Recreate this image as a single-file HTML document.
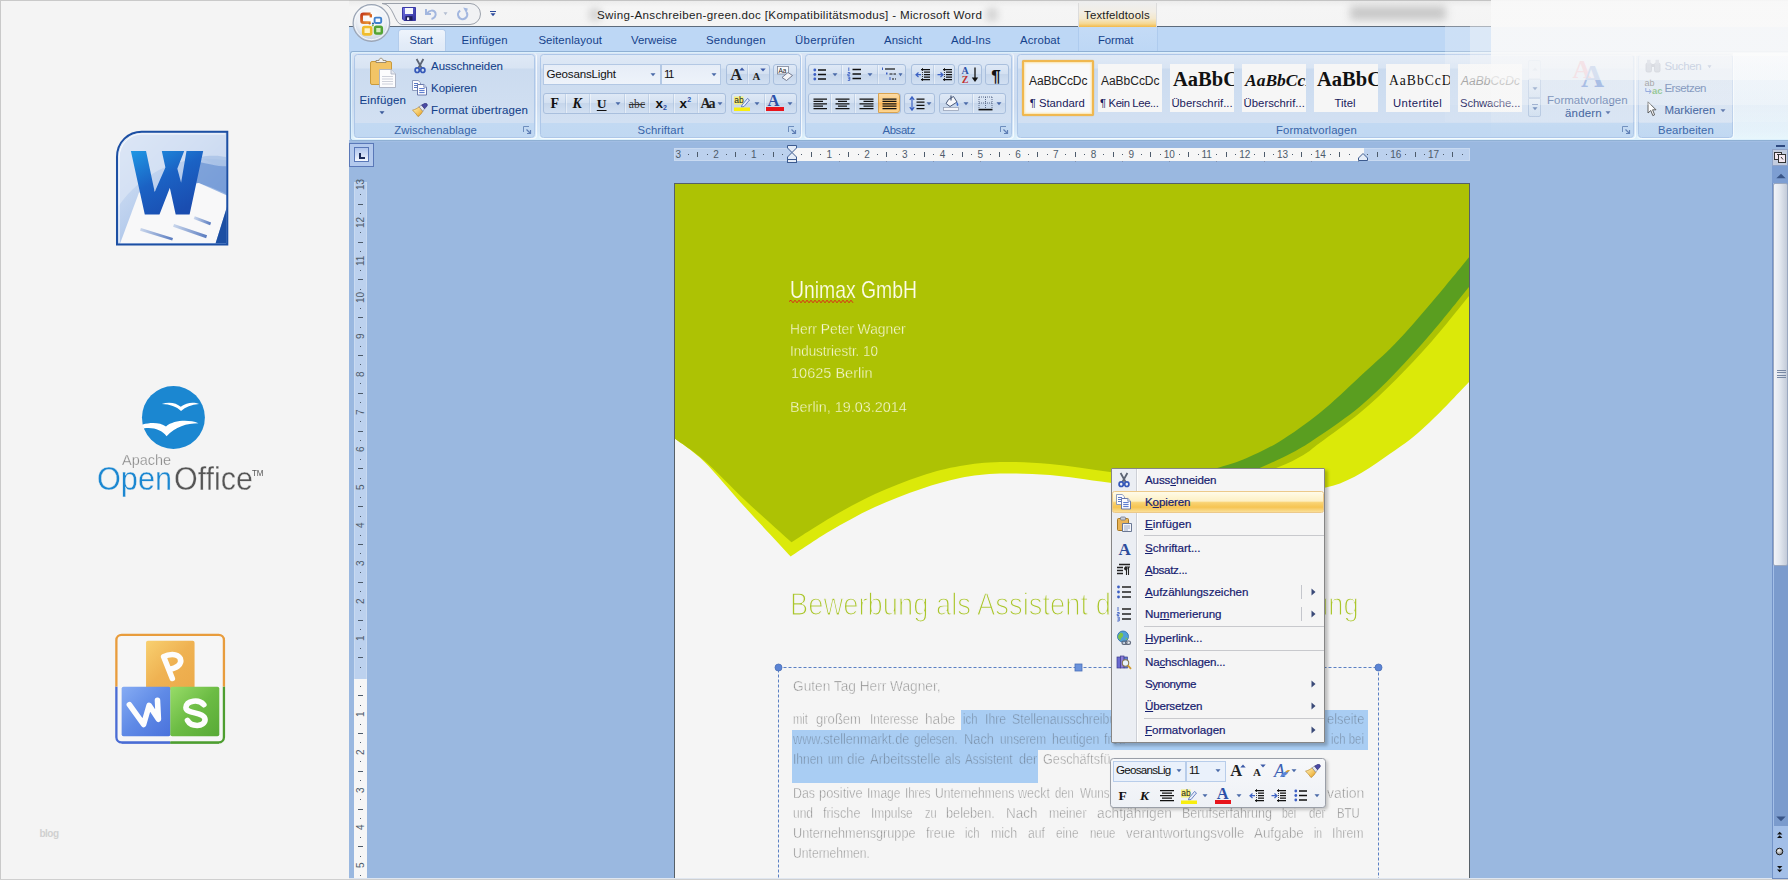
<!DOCTYPE html>
<html><head><meta charset="utf-8"><title>Word</title>
<style>
html,body{margin:0;padding:0}
html{width:1788px;height:880px;overflow:hidden}
body{width:1788px;height:880px;overflow:hidden;position:relative;background:#f4f4f4;font-family:"Liberation Sans",sans-serif}
div,span,svg{position:absolute;box-sizing:border-box}
span{white-space:pre;line-height:1}

</style></head>
<body>
<div style="left:0px;top:0px;width:349px;height:880px;background:#f4f4f4"></div>
<div style="left:0px;top:0px;width:1px;height:880px;background:#c9c9c9"></div>
<div style="left:0px;top:0px;width:349px;height:1px;background:#c9c9c9"></div>
<div style="left:349px;top:0px;width:1439px;height:27px;background:#efefef"></div>
<div style="left:349px;top:0px;width:1439px;height:1px;background:#c4c4c4"></div>
<div style="left:349px;top:27px;width:1439px;height:25px;background:#bed8f6"></div>
<div style="left:349px;top:52px;width:1439px;height:88px;background:linear-gradient(#c6dcf6,#cfe0f5 30%,#d6e5f8)"></div>
<div style="left:349px;top:140px;width:1439px;height:740px;background:#9ab8e0"></div>
<div style="left:674px;top:183px;width:796px;height:697px;background:#f5f5f5;border:1px solid #566068;border-bottom:none"></div>
<svg style="left:675px;top:184px;overflow:hidden" width="794" height="696" viewBox="0 0 794 696"><path d="M0.0 254.8C4.8 258.6 17.3 266.1 29.0 277.5C40.7 288.9 55.5 307.5 70.0 323.3C84.5 339.1 108.1 364.2 115.7 372.4C122.3 368.2 141.0 355.2 155.0 347.0C169.0 338.8 184.8 330.0 200.0 323.0C215.2 316.0 231.8 309.8 246.0 305.0C260.2 300.2 271.8 296.6 285.0 294.0C298.2 291.4 310.0 290.1 325.0 289.6C340.0 289.1 356.7 289.5 375.0 291.0C393.3 292.5 410.0 295.7 435.0 298.7C460.0 301.7 496.7 307.4 525.0 309.0C553.3 310.6 581.7 309.6 605.0 308.0C628.3 306.4 645.8 306.4 665.0 299.4C684.2 292.4 705.5 276.2 720.5 266.0C735.5 255.8 742.8 249.3 755.0 238.0C767.2 226.7 787.5 204.7 794.0 198.0L794 198.0 L794 -2 L0 -2 Z" fill="#dbe909"/><path d="M0.0 254.8C4.8 258.4 17.0 265.8 29.0 276.3C41.0 286.8 57.4 304.3 72.0 318.0C86.6 331.7 109.1 351.6 116.5 358.3C122.9 354.2 141.1 342.1 155.0 334.0C168.9 325.9 184.8 317.0 200.0 310.0C215.2 303.0 231.8 296.7 246.0 292.0C260.2 287.3 271.8 284.3 285.0 282.0C298.2 279.7 310.0 278.3 325.0 278.0C340.0 277.7 356.7 278.3 375.0 280.0C393.3 281.7 413.3 285.2 435.0 288.0C456.7 290.8 483.3 296.0 505.0 297.0C526.7 298.0 548.7 296.3 565.0 294.0C581.3 291.7 592.4 287.1 603.0 283.2C613.6 279.3 621.4 275.0 628.4 270.9C635.4 266.8 635.6 265.7 645.0 258.7C654.4 251.7 672.5 239.1 685.0 228.7C697.5 218.3 708.1 208.3 720.0 196.4C731.9 184.5 744.3 171.5 756.6 157.5C768.9 143.5 787.8 119.7 794.0 112.1L794 112.1 L794 -2 L0 -2 Z" fill="#adc204"/><path d="M455.0 306.0C463.3 304.0 490.0 297.8 505.0 294.0C520.0 290.2 533.8 286.5 544.9 283.2C556.0 279.9 561.9 278.3 571.8 274.0C581.7 269.7 592.4 264.9 604.6 257.4C616.8 249.8 631.6 239.5 645.0 228.7C658.4 217.9 672.5 203.9 685.0 192.4C697.5 180.9 708.1 172.1 720.0 159.8C731.9 147.5 744.3 132.9 756.6 118.5C768.9 104.1 787.8 80.7 794.0 73.2L794 73.2 L794 102.9 L794.0 102.9C787.8 110.5 768.9 134.3 756.6 148.7C744.3 163.1 731.9 177.0 720.0 189.3C708.1 201.6 697.5 212.0 685.0 222.4C672.5 232.8 655.8 244.1 645.0 251.5C634.2 258.9 630.3 261.6 620.5 266.9C610.7 272.2 602.2 276.3 586.3 283.2C570.4 290.1 546.9 300.9 525.0 308.0C503.1 315.1 466.7 323.0 455.0 326.0Z" fill="#5a9e20"/></svg>
<div style="left:674px;top:148px;width:796px;height:13px;background:#bcd1ee;border:1px solid #c9daf1"></div>
<div style="left:792px;top:148px;width:571.5px;height:13px;background:#f6f6f6"></div>
<div style="left:839px;top:161px;width:1px;height:1px;background:#8494b2"></div>
<div style="left:886px;top:161px;width:1px;height:1px;background:#8494b2"></div>
<div style="left:933px;top:161px;width:1px;height:1px;background:#8494b2"></div>
<div style="left:980px;top:161px;width:1px;height:1px;background:#8494b2"></div>
<div style="left:1028px;top:161px;width:1px;height:1px;background:#8494b2"></div>
<div style="left:1075px;top:161px;width:1px;height:1px;background:#8494b2"></div>
<div style="left:1122px;top:161px;width:1px;height:1px;background:#8494b2"></div>
<div style="left:1169px;top:161px;width:1px;height:1px;background:#8494b2"></div>
<div style="left:1216px;top:161px;width:1px;height:1px;background:#8494b2"></div>
<div style="left:1264px;top:161px;width:1px;height:1px;background:#8494b2"></div>
<div style="left:1311px;top:161px;width:1px;height:1px;background:#8494b2"></div>
<div style="left:1358px;top:161px;width:1px;height:1px;background:#8494b2"></div>
<svg style="left:674px;top:148px;" width="796" height="13" viewBox="0 0 796 13"><rect x="14.0" y="6" width="1" height="1" fill="#4d5b6b"/><rect x="23.0" y="4" width="1" height="5" fill="#4d5b6b"/><rect x="33.0" y="6" width="1" height="1" fill="#4d5b6b"/><rect x="52.0" y="6" width="1" height="1" fill="#4d5b6b"/><rect x="61.0" y="4" width="1" height="5" fill="#4d5b6b"/><rect x="71.0" y="6" width="1" height="1" fill="#4d5b6b"/><rect x="89.0" y="6" width="1" height="1" fill="#4d5b6b"/><rect x="99.0" y="4" width="1" height="5" fill="#4d5b6b"/><rect x="108.0" y="6" width="1" height="1" fill="#4d5b6b"/><rect x="127.0" y="6" width="1" height="1" fill="#4d5b6b"/><rect x="137.0" y="4" width="1" height="5" fill="#4d5b6b"/><rect x="146.0" y="6" width="1" height="1" fill="#4d5b6b"/><rect x="165.0" y="6" width="1" height="1" fill="#4d5b6b"/><rect x="174.0" y="4" width="1" height="5" fill="#4d5b6b"/><rect x="184.0" y="6" width="1" height="1" fill="#4d5b6b"/><rect x="203.0" y="6" width="1" height="1" fill="#4d5b6b"/><rect x="212.0" y="4" width="1" height="5" fill="#4d5b6b"/><rect x="222.0" y="6" width="1" height="1" fill="#4d5b6b"/><rect x="240.0" y="6" width="1" height="1" fill="#4d5b6b"/><rect x="250.0" y="4" width="1" height="5" fill="#4d5b6b"/><rect x="259.0" y="6" width="1" height="1" fill="#4d5b6b"/><rect x="278.0" y="6" width="1" height="1" fill="#4d5b6b"/><rect x="288.0" y="4" width="1" height="5" fill="#4d5b6b"/><rect x="297.0" y="6" width="1" height="1" fill="#4d5b6b"/><rect x="316.0" y="6" width="1" height="1" fill="#4d5b6b"/><rect x="325.0" y="4" width="1" height="5" fill="#4d5b6b"/><rect x="335.0" y="6" width="1" height="1" fill="#4d5b6b"/><rect x="354.0" y="6" width="1" height="1" fill="#4d5b6b"/><rect x="363.0" y="4" width="1" height="5" fill="#4d5b6b"/><rect x="373.0" y="6" width="1" height="1" fill="#4d5b6b"/><rect x="391.0" y="6" width="1" height="1" fill="#4d5b6b"/><rect x="401.0" y="4" width="1" height="5" fill="#4d5b6b"/><rect x="410.0" y="6" width="1" height="1" fill="#4d5b6b"/><rect x="429.0" y="6" width="1" height="1" fill="#4d5b6b"/><rect x="439.0" y="4" width="1" height="5" fill="#4d5b6b"/><rect x="448.0" y="6" width="1" height="1" fill="#4d5b6b"/><rect x="467.0" y="6" width="1" height="1" fill="#4d5b6b"/><rect x="476.0" y="4" width="1" height="5" fill="#4d5b6b"/><rect x="486.0" y="6" width="1" height="1" fill="#4d5b6b"/><rect x="505.0" y="6" width="1" height="1" fill="#4d5b6b"/><rect x="514.0" y="4" width="1" height="5" fill="#4d5b6b"/><rect x="524.0" y="6" width="1" height="1" fill="#4d5b6b"/><rect x="542.0" y="6" width="1" height="1" fill="#4d5b6b"/><rect x="552.0" y="4" width="1" height="5" fill="#4d5b6b"/><rect x="561.0" y="6" width="1" height="1" fill="#4d5b6b"/><rect x="580.0" y="6" width="1" height="1" fill="#4d5b6b"/><rect x="590.0" y="4" width="1" height="5" fill="#4d5b6b"/><rect x="599.0" y="6" width="1" height="1" fill="#4d5b6b"/><rect x="618.0" y="6" width="1" height="1" fill="#4d5b6b"/><rect x="627.0" y="4" width="1" height="5" fill="#4d5b6b"/><rect x="637.0" y="6" width="1" height="1" fill="#4d5b6b"/><rect x="656.0" y="6" width="1" height="1" fill="#4d5b6b"/><rect x="665.0" y="4" width="1" height="5" fill="#4d5b6b"/><rect x="675.0" y="6" width="1" height="1" fill="#4d5b6b"/><rect x="693.0" y="6" width="1" height="1" fill="#4d5b6b"/><rect x="703.0" y="4" width="1" height="5" fill="#4d5b6b"/><rect x="712.0" y="6" width="1" height="1" fill="#4d5b6b"/><rect x="731.0" y="6" width="1" height="1" fill="#4d5b6b"/><rect x="741.0" y="4" width="1" height="5" fill="#4d5b6b"/><rect x="750.0" y="6" width="1" height="1" fill="#4d5b6b"/><rect x="769.0" y="6" width="1" height="1" fill="#4d5b6b"/><rect x="778.0" y="4" width="1" height="5" fill="#4d5b6b"/><rect x="788.0" y="6" width="1" height="1" fill="#4d5b6b"/></svg>
<span style="left:675.45px;top:150.00px;font-size:10px;letter-spacing:0.000px;color:#4d5b6b;font-family:'Liberation Sans';font-weight:normal;font-style:normal;">3</span>
<span style="left:713.20px;top:150.00px;font-size:10px;letter-spacing:0.000px;color:#4d5b6b;font-family:'Liberation Sans';font-weight:normal;font-style:normal;">2</span>
<span style="left:750.95px;top:150.00px;font-size:10px;letter-spacing:0.000px;color:#4d5b6b;font-family:'Liberation Sans';font-weight:normal;font-style:normal;">1</span>
<span style="left:826.45px;top:150.00px;font-size:10px;letter-spacing:0.000px;color:#4d5b6b;font-family:'Liberation Sans';font-weight:normal;font-style:normal;">1</span>
<span style="left:864.20px;top:150.00px;font-size:10px;letter-spacing:0.000px;color:#4d5b6b;font-family:'Liberation Sans';font-weight:normal;font-style:normal;">2</span>
<span style="left:901.95px;top:150.00px;font-size:10px;letter-spacing:0.000px;color:#4d5b6b;font-family:'Liberation Sans';font-weight:normal;font-style:normal;">3</span>
<span style="left:939.70px;top:150.00px;font-size:10px;letter-spacing:0.000px;color:#4d5b6b;font-family:'Liberation Sans';font-weight:normal;font-style:normal;">4</span>
<span style="left:977.45px;top:150.00px;font-size:10px;letter-spacing:0.000px;color:#4d5b6b;font-family:'Liberation Sans';font-weight:normal;font-style:normal;">5</span>
<span style="left:1015.20px;top:150.00px;font-size:10px;letter-spacing:0.000px;color:#4d5b6b;font-family:'Liberation Sans';font-weight:normal;font-style:normal;">6</span>
<span style="left:1052.95px;top:150.00px;font-size:10px;letter-spacing:0.000px;color:#4d5b6b;font-family:'Liberation Sans';font-weight:normal;font-style:normal;">7</span>
<span style="left:1090.70px;top:150.00px;font-size:10px;letter-spacing:0.000px;color:#4d5b6b;font-family:'Liberation Sans';font-weight:normal;font-style:normal;">8</span>
<span style="left:1128.45px;top:150.00px;font-size:10px;letter-spacing:0.000px;color:#4d5b6b;font-family:'Liberation Sans';font-weight:normal;font-style:normal;">9</span>
<span style="left:1163.70px;top:150.00px;font-size:10px;letter-spacing:0.000px;color:#4d5b6b;font-family:'Liberation Sans';font-weight:normal;font-style:normal;">10</span>
<span style="left:1201.45px;top:150.00px;font-size:10px;letter-spacing:0.000px;color:#4d5b6b;font-family:'Liberation Sans';font-weight:normal;font-style:normal;">11</span>
<span style="left:1239.20px;top:150.00px;font-size:10px;letter-spacing:0.000px;color:#4d5b6b;font-family:'Liberation Sans';font-weight:normal;font-style:normal;">12</span>
<span style="left:1276.95px;top:150.00px;font-size:10px;letter-spacing:0.000px;color:#4d5b6b;font-family:'Liberation Sans';font-weight:normal;font-style:normal;">13</span>
<span style="left:1314.70px;top:150.00px;font-size:10px;letter-spacing:0.000px;color:#4d5b6b;font-family:'Liberation Sans';font-weight:normal;font-style:normal;">14</span>
<span style="left:1390.20px;top:150.00px;font-size:10px;letter-spacing:0.000px;color:#4d5b6b;font-family:'Liberation Sans';font-weight:normal;font-style:normal;">16</span>
<span style="left:1427.95px;top:150.00px;font-size:10px;letter-spacing:0.000px;color:#4d5b6b;font-family:'Liberation Sans';font-weight:normal;font-style:normal;">17</span>
<svg style="left:786px;top:144px;" width="12" height="20" viewBox="0 0 12 20"><path d="M1.5 1.5H10.5V4L6 8.5L1.5 4Z" fill="#e4ecf7" stroke="#3c5a8e" stroke-width="1"/><path d="M6 8.5L10.5 13V15.5H1.5V13Z" fill="#e4ecf7" stroke="#3c5a8e"/><rect x="1.5" y="15.5" width="9" height="3" fill="#e4ecf7" stroke="#3c5a8e"/></svg>
<svg style="left:1357.3px;top:152px;" width="12" height="10" viewBox="0 0 12 10"><path d="M6 1.5L10.5 6V8.5H1.5V6Z" fill="#e4ecf7" stroke="#3c5a8e"/></svg>
<div style="left:349px;top:143px;width:25px;height:24px;background:#b3c9ed;border:1px solid #5a78b8"></div>
<div style="left:354px;top:147px;width:15px;height:15px;background:linear-gradient(#b0c6ee,#cfdcf5 50%,#f6f9ff);border:1px solid #5a78b8"></div>
<div style="left:359px;top:153px;width:2px;height:6px;background:#1c2c5a"></div>
<div style="left:359px;top:157px;width:6px;height:2px;background:#1c2c5a"></div>
<div style="left:354px;top:182px;width:13px;height:698px;background:#bcd1ee;border:1px solid #c9daf1;border-bottom:none"></div>
<div style="left:354px;top:678.5px;width:13px;height:201.5px;background:#f6f6f6"></div>
<svg style="left:354px;top:182px;" width="13" height="698" viewBox="0 0 13 698"><rect x="6" y="12" width="1" height="1" fill="#4d5b6b"/><rect x="4" y="22" width="5" height="1" fill="#4d5b6b"/><rect x="6" y="31" width="1" height="1" fill="#4d5b6b"/><rect x="6" y="50" width="1" height="1" fill="#4d5b6b"/><rect x="4" y="60" width="5" height="1" fill="#4d5b6b"/><rect x="6" y="69" width="1" height="1" fill="#4d5b6b"/><rect x="6" y="88" width="1" height="1" fill="#4d5b6b"/><rect x="4" y="97" width="5" height="1" fill="#4d5b6b"/><rect x="6" y="107" width="1" height="1" fill="#4d5b6b"/><rect x="6" y="126" width="1" height="1" fill="#4d5b6b"/><rect x="4" y="135" width="5" height="1" fill="#4d5b6b"/><rect x="6" y="145" width="1" height="1" fill="#4d5b6b"/><rect x="6" y="164" width="1" height="1" fill="#4d5b6b"/><rect x="4" y="173" width="5" height="1" fill="#4d5b6b"/><rect x="6" y="182" width="1" height="1" fill="#4d5b6b"/><rect x="6" y="201" width="1" height="1" fill="#4d5b6b"/><rect x="4" y="211" width="5" height="1" fill="#4d5b6b"/><rect x="6" y="220" width="1" height="1" fill="#4d5b6b"/><rect x="6" y="239" width="1" height="1" fill="#4d5b6b"/><rect x="4" y="249" width="5" height="1" fill="#4d5b6b"/><rect x="6" y="258" width="1" height="1" fill="#4d5b6b"/><rect x="6" y="277" width="1" height="1" fill="#4d5b6b"/><rect x="4" y="286" width="5" height="1" fill="#4d5b6b"/><rect x="6" y="296" width="1" height="1" fill="#4d5b6b"/><rect x="6" y="315" width="1" height="1" fill="#4d5b6b"/><rect x="4" y="324" width="5" height="1" fill="#4d5b6b"/><rect x="6" y="334" width="1" height="1" fill="#4d5b6b"/><rect x="6" y="353" width="1" height="1" fill="#4d5b6b"/><rect x="4" y="362" width="5" height="1" fill="#4d5b6b"/><rect x="6" y="371" width="1" height="1" fill="#4d5b6b"/><rect x="6" y="390" width="1" height="1" fill="#4d5b6b"/><rect x="4" y="400" width="5" height="1" fill="#4d5b6b"/><rect x="6" y="409" width="1" height="1" fill="#4d5b6b"/><rect x="6" y="428" width="1" height="1" fill="#4d5b6b"/><rect x="4" y="438" width="5" height="1" fill="#4d5b6b"/><rect x="6" y="447" width="1" height="1" fill="#4d5b6b"/><rect x="6" y="466" width="1" height="1" fill="#4d5b6b"/><rect x="4" y="475" width="5" height="1" fill="#4d5b6b"/><rect x="6" y="485" width="1" height="1" fill="#4d5b6b"/><rect x="6" y="504" width="1" height="1" fill="#4d5b6b"/><rect x="4" y="513" width="5" height="1" fill="#4d5b6b"/><rect x="6" y="523" width="1" height="1" fill="#4d5b6b"/><rect x="6" y="542" width="1" height="1" fill="#4d5b6b"/><rect x="4" y="551" width="5" height="1" fill="#4d5b6b"/><rect x="6" y="560" width="1" height="1" fill="#4d5b6b"/><rect x="6" y="579" width="1" height="1" fill="#4d5b6b"/><rect x="4" y="589" width="5" height="1" fill="#4d5b6b"/><rect x="6" y="598" width="1" height="1" fill="#4d5b6b"/><rect x="6" y="617" width="1" height="1" fill="#4d5b6b"/><rect x="4" y="627" width="5" height="1" fill="#4d5b6b"/><rect x="6" y="636" width="1" height="1" fill="#4d5b6b"/><rect x="6" y="655" width="1" height="1" fill="#4d5b6b"/><rect x="4" y="664" width="5" height="1" fill="#4d5b6b"/><rect x="6" y="674" width="1" height="1" fill="#4d5b6b"/><rect x="6" y="693" width="1" height="1" fill="#4d5b6b"/></svg>
<span style="left:356.2px;top:190.0px;font-size:10px;color:#4d5b6b;transform:rotate(-90deg);transform-origin:0 0;width:9.2px;text-align:center">13</span>
<span style="left:356.2px;top:227.8px;font-size:10px;color:#4d5b6b;transform:rotate(-90deg);transform-origin:0 0;width:9.2px;text-align:center">12</span>
<span style="left:356.2px;top:265.6px;font-size:10px;color:#4d5b6b;transform:rotate(-90deg);transform-origin:0 0;width:9.2px;text-align:center">11</span>
<span style="left:356.2px;top:303.4px;font-size:10px;color:#4d5b6b;transform:rotate(-90deg);transform-origin:0 0;width:9.2px;text-align:center">10</span>
<span style="left:356.2px;top:338.9px;font-size:10px;color:#4d5b6b;transform:rotate(-90deg);transform-origin:0 0;width:4.6px;text-align:center">9</span>
<span style="left:356.2px;top:376.7px;font-size:10px;color:#4d5b6b;transform:rotate(-90deg);transform-origin:0 0;width:4.6px;text-align:center">8</span>
<span style="left:356.2px;top:414.5px;font-size:10px;color:#4d5b6b;transform:rotate(-90deg);transform-origin:0 0;width:4.6px;text-align:center">7</span>
<span style="left:356.2px;top:452.3px;font-size:10px;color:#4d5b6b;transform:rotate(-90deg);transform-origin:0 0;width:4.6px;text-align:center">6</span>
<span style="left:356.2px;top:490.1px;font-size:10px;color:#4d5b6b;transform:rotate(-90deg);transform-origin:0 0;width:4.6px;text-align:center">5</span>
<span style="left:356.2px;top:527.9px;font-size:10px;color:#4d5b6b;transform:rotate(-90deg);transform-origin:0 0;width:4.6px;text-align:center">4</span>
<span style="left:356.2px;top:565.7px;font-size:10px;color:#4d5b6b;transform:rotate(-90deg);transform-origin:0 0;width:4.6px;text-align:center">3</span>
<span style="left:356.2px;top:603.5px;font-size:10px;color:#4d5b6b;transform:rotate(-90deg);transform-origin:0 0;width:4.6px;text-align:center">2</span>
<span style="left:356.2px;top:641.3px;font-size:10px;color:#4d5b6b;transform:rotate(-90deg);transform-origin:0 0;width:4.6px;text-align:center">1</span>
<span style="left:356.2px;top:716.9px;font-size:10px;color:#4d5b6b;transform:rotate(-90deg);transform-origin:0 0;width:4.6px;text-align:center">1</span>
<span style="left:356.2px;top:754.7px;font-size:10px;color:#4d5b6b;transform:rotate(-90deg);transform-origin:0 0;width:4.6px;text-align:center">2</span>
<span style="left:356.2px;top:792.5px;font-size:10px;color:#4d5b6b;transform:rotate(-90deg);transform-origin:0 0;width:4.6px;text-align:center">3</span>
<span style="left:356.2px;top:830.3px;font-size:10px;color:#4d5b6b;transform:rotate(-90deg);transform-origin:0 0;width:4.6px;text-align:center">4</span>
<span style="left:356.2px;top:868.1px;font-size:10px;color:#4d5b6b;transform:rotate(-90deg);transform-origin:0 0;width:4.6px;text-align:center">5</span>
<span style="left:789.50px;top:279.00px;font-size:23.4px;letter-spacing:0.000px;color:#fcfce8;font-family:'Liberation Sans';font-weight:normal;font-style:normal;-webkit-text-stroke:0.15px #adc204;transform:scaleX(0.8280);transform-origin:0 0;">Unimax GmbH</span>
<svg style="left:789px;top:300px;" width="65" height="4" viewBox="0 0 65 4"><path d="M0 1.5L2 0.2L4 2.8L6 0.2L8 2.8L10 0.2L12 2.8L14 0.2L16 2.8L18 0.2L20 2.8L22 0.2L24 2.8L26 0.2L28 2.8L30 0.2L32 2.8L34 0.2L36 2.8L38 0.2L40 2.8L42 0.2L44 2.8L46 0.2L48 2.8L50 0.2L52 2.8L54 0.2L56 2.8L58 0.2L60 2.8L62 0.2L64 2.8" fill="none" stroke="#e0201a" stroke-width="0.9"/></svg>
<span style="left:789.50px;top:321.00px;font-size:15.3px;letter-spacing:0.000px;color:#f6f8d8;font-family:'Liberation Sans';font-weight:normal;font-style:normal;-webkit-text-stroke:0.3px #adc204;transform:scaleX(0.9037);transform-origin:0 0;">Herr Peter Wagner</span>
<span style="left:789.50px;top:343.00px;font-size:15.3px;letter-spacing:0.000px;color:#f6f8d8;font-family:'Liberation Sans';font-weight:normal;font-style:normal;-webkit-text-stroke:0.3px #adc204;transform:scaleX(0.8770);transform-origin:0 0;">Industriestr. 10</span>
<span style="left:790.50px;top:365.00px;font-size:15.3px;letter-spacing:0.000px;color:#f6f8d8;font-family:'Liberation Sans';font-weight:normal;font-style:normal;-webkit-text-stroke:0.3px #adc204;transform:scaleX(0.9487);transform-origin:0 0;">10625 Berlin</span>
<span style="left:789.50px;top:399.00px;font-size:15.3px;letter-spacing:0.000px;color:#f6f8d8;font-family:'Liberation Sans';font-weight:normal;font-style:normal;-webkit-text-stroke:0.3px #adc204;transform:scaleX(0.9406);transform-origin:0 0;">Berlin, 19.03.2014</span>
<span style="left:789.70px;top:589.00px;font-size:30.5px;letter-spacing:0.000px;color:#aac62a;font-family:'Liberation Sans';font-weight:normal;font-style:normal;-webkit-text-stroke:1.25px #f5f5f5;transform:scaleX(0.8969);transform-origin:0 0;">Bewerbung als Assistent der Geschäftsführung</span>
<div style="left:961px;top:710px;width:406.5px;height:20px;background:#a9cdf3"></div>
<div style="left:792px;top:730px;width:575.5px;height:20px;background:#a9cdf3"></div>
<div style="left:792px;top:750px;width:246px;height:32.5px;background:#a9cdf3"></div>
<svg style="left:770px;top:660px" width="620" height="220" viewBox="770 660 620 220"><rect x="778.5" y="667.5" width="600" height="240" fill="none" stroke="#5b80c4" stroke-width="1" stroke-dasharray="3 2"/><circle cx="778.5" cy="667.5" r="3.5" fill="#5b84d4" stroke="#4a6fb8" stroke-width="0.8"/><circle cx="1378.5" cy="667.5" r="3.5" fill="#5b84d4" stroke="#4a6fb8" stroke-width="0.8"/><rect x="1075" y="664" width="7" height="7" fill="#6b93dc" stroke="#4a6fb8" stroke-width="0.8"/></svg>
<span style="left:792.50px;top:679.00px;font-size:14px;letter-spacing:0.000px;color:#858585;font-family:'Liberation Sans';font-weight:normal;font-style:normal;-webkit-text-stroke:0.5px #f5f5f5;transform:scaleX(0.9770);transform-origin:0 0;">Guten Tag Herr Wagner,</span>
<span style="left:792.50px;top:712.00px;font-size:14px;letter-spacing:0.000px;color:#858585;font-family:'Liberation Sans';font-weight:normal;font-style:normal;-webkit-text-stroke:0.5px #f5f5f5;transform:scaleX(0.8033);transform-origin:0 0;">mit</span>
<span style="left:816.00px;top:712.00px;font-size:14px;letter-spacing:0.000px;color:#858585;font-family:'Liberation Sans';font-weight:normal;font-style:normal;-webkit-text-stroke:0.5px #f5f5f5;transform:scaleX(0.9329);transform-origin:0 0;">großem</span>
<span style="left:869.50px;top:712.00px;font-size:14px;letter-spacing:0.000px;color:#858585;font-family:'Liberation Sans';font-weight:normal;font-style:normal;-webkit-text-stroke:0.5px #f5f5f5;transform:scaleX(0.8421);transform-origin:0 0;">Interesse</span>
<span style="left:925.00px;top:712.00px;font-size:14px;letter-spacing:0.000px;color:#858585;font-family:'Liberation Sans';font-weight:normal;font-style:normal;-webkit-text-stroke:0.5px #f5f5f5;transform:scaleX(0.9789);transform-origin:0 0;">habe</span>
<span style="left:963.00px;top:712.00px;font-size:14px;letter-spacing:0.000px;color:#6f8298;font-family:'Liberation Sans';font-weight:normal;font-style:normal;-webkit-text-stroke:0.5px #a9cdf3;transform:scaleX(0.8098);transform-origin:0 0;">ich</span>
<span style="left:985.00px;top:712.00px;font-size:14px;letter-spacing:0.000px;color:#6f8298;font-family:'Liberation Sans';font-weight:normal;font-style:normal;-webkit-text-stroke:0.5px #a9cdf3;transform:scaleX(0.8705);transform-origin:0 0;">Ihre</span>
<span style="left:1012.00px;top:712.00px;font-size:14px;letter-spacing:0.000px;color:#6f8298;font-family:'Liberation Sans';font-weight:normal;font-style:normal;-webkit-text-stroke:0.5px #a9cdf3;transform:scaleX(0.8814);transform-origin:0 0;">Stellenausschreibung</span>
<span style="left:1326.60px;top:712.00px;font-size:14px;letter-spacing:0.000px;color:#6f8298;font-family:'Liberation Sans';font-weight:normal;font-style:normal;-webkit-text-stroke:0.5px #a9cdf3;transform:scaleX(0.9242);transform-origin:0 0;">elseite</span>
<span style="left:792.50px;top:732.00px;font-size:14px;letter-spacing:0.000px;color:#6f8298;font-family:'Liberation Sans';font-weight:normal;font-style:normal;-webkit-text-stroke:0.5px #a9cdf3;transform:scaleX(0.9054);transform-origin:0 0;">www.stellenmarkt.de</span>
<span style="left:913.75px;top:732.00px;font-size:14px;letter-spacing:0.000px;color:#6f8298;font-family:'Liberation Sans';font-weight:normal;font-style:normal;-webkit-text-stroke:0.5px #a9cdf3;transform:scaleX(0.8264);transform-origin:0 0;">gelesen.</span>
<span style="left:963.75px;top:732.00px;font-size:14px;letter-spacing:0.000px;color:#6f8298;font-family:'Liberation Sans';font-weight:normal;font-style:normal;-webkit-text-stroke:0.5px #a9cdf3;transform:scaleX(0.9178);transform-origin:0 0;">Nach</span>
<span style="left:1000.00px;top:732.00px;font-size:14px;letter-spacing:0.000px;color:#6f8298;font-family:'Liberation Sans';font-weight:normal;font-style:normal;-webkit-text-stroke:0.5px #a9cdf3;transform:scaleX(0.8445);transform-origin:0 0;">unserem</span>
<span style="left:1052.00px;top:732.00px;font-size:14px;letter-spacing:0.000px;color:#6f8298;font-family:'Liberation Sans';font-weight:normal;font-style:normal;-webkit-text-stroke:0.5px #a9cdf3;transform:scaleX(0.8842);transform-origin:0 0;">heutigen</span>
<span style="left:1103.75px;top:732.00px;font-size:14px;letter-spacing:0.000px;color:#6f8298;font-family:'Liberation Sans';font-weight:normal;font-style:normal;-webkit-text-stroke:0.5px #a9cdf3;transform:scaleX(0.8808);transform-origin:0 0;">freu</span>
<span style="left:1331.00px;top:732.00px;font-size:14px;letter-spacing:0.000px;color:#6f8298;font-family:'Liberation Sans';font-weight:normal;font-style:normal;-webkit-text-stroke:0.5px #a9cdf3;transform:scaleX(0.8154);transform-origin:0 0;">ich bei</span>
<span style="left:792.50px;top:752.00px;font-size:14px;letter-spacing:0.000px;color:#6f8298;font-family:'Liberation Sans';font-weight:normal;font-style:normal;-webkit-text-stroke:0.5px #a9cdf3;transform:scaleX(0.8560);transform-origin:0 0;">Ihnen</span>
<span style="left:827.50px;top:752.00px;font-size:14px;letter-spacing:0.000px;color:#6f8298;font-family:'Liberation Sans';font-weight:normal;font-style:normal;-webkit-text-stroke:0.5px #a9cdf3;transform:scaleX(0.7711);transform-origin:0 0;">um</span>
<span style="left:847.00px;top:752.00px;font-size:14px;letter-spacing:0.000px;color:#6f8298;font-family:'Liberation Sans';font-weight:normal;font-style:normal;-webkit-text-stroke:0.5px #a9cdf3;transform:scaleX(0.9632);transform-origin:0 0;">die</span>
<span style="left:869.50px;top:752.00px;font-size:14px;letter-spacing:0.000px;color:#6f8298;font-family:'Liberation Sans';font-weight:normal;font-style:normal;-webkit-text-stroke:0.5px #a9cdf3;transform:scaleX(0.9244);transform-origin:0 0;">Arbeitsstelle</span>
<span style="left:944.50px;top:752.00px;font-size:14px;letter-spacing:0.000px;color:#6f8298;font-family:'Liberation Sans';font-weight:normal;font-style:normal;-webkit-text-stroke:0.5px #a9cdf3;transform:scaleX(0.8656);transform-origin:0 0;">als</span>
<span style="left:965.00px;top:752.00px;font-size:14px;letter-spacing:0.000px;color:#6f8298;font-family:'Liberation Sans';font-weight:normal;font-style:normal;-webkit-text-stroke:0.5px #a9cdf3;transform:scaleX(0.8361);transform-origin:0 0;">Assistent</span>
<span style="left:1018.75px;top:752.00px;font-size:14px;letter-spacing:0.000px;color:#6f8298;font-family:'Liberation Sans';font-weight:normal;font-style:normal;-webkit-text-stroke:0.5px #a9cdf3;transform:scaleX(0.9019);transform-origin:0 0;">der</span>
<span style="left:1042.50px;top:752.00px;font-size:14px;letter-spacing:0.000px;color:#858585;font-family:'Liberation Sans';font-weight:normal;font-style:normal;-webkit-text-stroke:0.5px #f5f5f5;transform:scaleX(0.9036);transform-origin:0 0;">Geschäftsfü</span>
<span style="left:792.50px;top:786.00px;font-size:14px;letter-spacing:0.000px;color:#858585;font-family:'Liberation Sans';font-weight:normal;font-style:normal;-webkit-text-stroke:0.5px #f5f5f5;transform:scaleX(0.8833);transform-origin:0 0;">Das</span>
<span style="left:818.75px;top:786.00px;font-size:14px;letter-spacing:0.000px;color:#858585;font-family:'Liberation Sans';font-weight:normal;font-style:normal;-webkit-text-stroke:0.5px #f5f5f5;transform:scaleX(0.9217);transform-origin:0 0;">positive</span>
<span style="left:867.00px;top:786.00px;font-size:14px;letter-spacing:0.000px;color:#858585;font-family:'Liberation Sans';font-weight:normal;font-style:normal;-webkit-text-stroke:0.5px #f5f5f5;transform:scaleX(0.8607);transform-origin:0 0;">Image</span>
<span style="left:905.00px;top:786.00px;font-size:14px;letter-spacing:0.000px;color:#858585;font-family:'Liberation Sans';font-weight:normal;font-style:normal;-webkit-text-stroke:0.5px #f5f5f5;transform:scaleX(0.8193);transform-origin:0 0;">Ihres</span>
<span style="left:934.50px;top:786.00px;font-size:14px;letter-spacing:0.000px;color:#858585;font-family:'Liberation Sans';font-weight:normal;font-style:normal;-webkit-text-stroke:0.5px #f5f5f5;transform:scaleX(0.8630);transform-origin:0 0;">Unternehmens</span>
<span style="left:1018.00px;top:786.00px;font-size:14px;letter-spacing:0.000px;color:#858585;font-family:'Liberation Sans';font-weight:normal;font-style:normal;-webkit-text-stroke:0.5px #f5f5f5;transform:scaleX(0.8939);transform-origin:0 0;">weckt</span>
<span style="left:1055.00px;top:786.00px;font-size:14px;letter-spacing:0.000px;color:#858585;font-family:'Liberation Sans';font-weight:normal;font-style:normal;-webkit-text-stroke:0.5px #f5f5f5;transform:scaleX(0.8027);transform-origin:0 0;">den</span>
<span style="left:1080.00px;top:786.00px;font-size:14px;letter-spacing:0.000px;color:#858585;font-family:'Liberation Sans';font-weight:normal;font-style:normal;-webkit-text-stroke:0.5px #f5f5f5;transform:scaleX(0.8300);transform-origin:0 0;">Wunsch,</span>
<span style="left:1326.60px;top:786.00px;font-size:14px;letter-spacing:0.000px;color:#858585;font-family:'Liberation Sans';font-weight:normal;font-style:normal;-webkit-text-stroke:0.5px #f5f5f5;transform:scaleX(1.0011);transform-origin:0 0;">vation</span>
<span style="left:792.50px;top:806.00px;font-size:14px;letter-spacing:0.000px;color:#858585;font-family:'Liberation Sans';font-weight:normal;font-style:normal;-webkit-text-stroke:0.5px #f5f5f5;transform:scaleX(0.8562);transform-origin:0 0;">und</span>
<span style="left:823.00px;top:806.00px;font-size:14px;letter-spacing:0.000px;color:#858585;font-family:'Liberation Sans';font-weight:normal;font-style:normal;-webkit-text-stroke:0.5px #f5f5f5;transform:scaleX(0.9094);transform-origin:0 0;">frische</span>
<span style="left:871.25px;top:806.00px;font-size:14px;letter-spacing:0.000px;color:#858585;font-family:'Liberation Sans';font-weight:normal;font-style:normal;-webkit-text-stroke:0.5px #f5f5f5;transform:scaleX(0.8515);transform-origin:0 0;">Impulse</span>
<span style="left:924.50px;top:806.00px;font-size:14px;letter-spacing:0.000px;color:#858585;font-family:'Liberation Sans';font-weight:normal;font-style:normal;-webkit-text-stroke:0.5px #f5f5f5;transform:scaleX(0.7941);transform-origin:0 0;">zu</span>
<span style="left:946.25px;top:806.00px;font-size:14px;letter-spacing:0.000px;color:#858585;font-family:'Liberation Sans';font-weight:normal;font-style:normal;-webkit-text-stroke:0.5px #f5f5f5;transform:scaleX(0.9075);transform-origin:0 0;">beleben.</span>
<span style="left:1005.50px;top:806.00px;font-size:14px;letter-spacing:0.000px;color:#858585;font-family:'Liberation Sans';font-weight:normal;font-style:normal;-webkit-text-stroke:0.5px #f5f5f5;transform:scaleX(0.9637);transform-origin:0 0;">Nach</span>
<span style="left:1048.75px;top:806.00px;font-size:14px;letter-spacing:0.000px;color:#858585;font-family:'Liberation Sans';font-weight:normal;font-style:normal;-webkit-text-stroke:0.5px #f5f5f5;transform:scaleX(0.8762);transform-origin:0 0;">meiner</span>
<span style="left:1097.00px;top:806.00px;font-size:14px;letter-spacing:0.000px;color:#858585;font-family:'Liberation Sans';font-weight:normal;font-style:normal;-webkit-text-stroke:0.5px #f5f5f5;transform:scaleX(0.9832);transform-origin:0 0;">achtjährigen</span>
<span style="left:1182.00px;top:806.00px;font-size:14px;letter-spacing:0.000px;color:#858585;font-family:'Liberation Sans';font-weight:normal;font-style:normal;-webkit-text-stroke:0.5px #f5f5f5;transform:scaleX(0.8964);transform-origin:0 0;">Berufserfahrung</span>
<span style="left:1282.00px;top:806.00px;font-size:14px;letter-spacing:0.000px;color:#858585;font-family:'Liberation Sans';font-weight:normal;font-style:normal;-webkit-text-stroke:0.5px #f5f5f5;transform:scaleX(0.7492);transform-origin:0 0;">bei</span>
<span style="left:1308.60px;top:806.00px;font-size:14px;letter-spacing:0.000px;color:#858585;font-family:'Liberation Sans';font-weight:normal;font-style:normal;-webkit-text-stroke:0.5px #f5f5f5;transform:scaleX(0.8105);transform-origin:0 0;">der</span>
<span style="left:1337.00px;top:806.00px;font-size:14px;letter-spacing:0.000px;color:#858585;font-family:'Liberation Sans';font-weight:normal;font-style:normal;-webkit-text-stroke:0.5px #f5f5f5;transform:scaleX(0.8107);transform-origin:0 0;">BTU</span>
<span style="left:792.50px;top:826.00px;font-size:14px;letter-spacing:0.000px;color:#858585;font-family:'Liberation Sans';font-weight:normal;font-style:normal;-webkit-text-stroke:0.5px #f5f5f5;transform:scaleX(0.9046);transform-origin:0 0;">Unternehmensgruppe</span>
<span style="left:925.50px;top:826.00px;font-size:14px;letter-spacing:0.000px;color:#858585;font-family:'Liberation Sans';font-weight:normal;font-style:normal;-webkit-text-stroke:0.5px #f5f5f5;transform:scaleX(0.9085);transform-origin:0 0;">freue</span>
<span style="left:965.00px;top:826.00px;font-size:14px;letter-spacing:0.000px;color:#858585;font-family:'Liberation Sans';font-weight:normal;font-style:normal;-webkit-text-stroke:0.5px #f5f5f5;transform:scaleX(0.8098);transform-origin:0 0;">ich</span>
<span style="left:991.25px;top:826.00px;font-size:14px;letter-spacing:0.000px;color:#858585;font-family:'Liberation Sans';font-weight:normal;font-style:normal;-webkit-text-stroke:0.5px #f5f5f5;transform:scaleX(0.8879);transform-origin:0 0;">mich</span>
<span style="left:1028.00px;top:826.00px;font-size:14px;letter-spacing:0.000px;color:#858585;font-family:'Liberation Sans';font-weight:normal;font-style:normal;-webkit-text-stroke:0.5px #f5f5f5;transform:scaleX(0.8732);transform-origin:0 0;">auf</span>
<span style="left:1056.25px;top:826.00px;font-size:14px;letter-spacing:0.000px;color:#858585;font-family:'Liberation Sans';font-weight:normal;font-style:normal;-webkit-text-stroke:0.5px #f5f5f5;transform:scaleX(0.8501);transform-origin:0 0;">eine</span>
<span style="left:1089.50px;top:826.00px;font-size:14px;letter-spacing:0.000px;color:#858585;font-family:'Liberation Sans';font-weight:normal;font-style:normal;-webkit-text-stroke:0.5px #f5f5f5;transform:scaleX(0.8185);transform-origin:0 0;">neue</span>
<span style="left:1125.50px;top:826.00px;font-size:14px;letter-spacing:0.000px;color:#858585;font-family:'Liberation Sans';font-weight:normal;font-style:normal;-webkit-text-stroke:0.5px #f5f5f5;transform:scaleX(0.9501);transform-origin:0 0;">verantwortungsvolle</span>
<span style="left:1254.00px;top:826.00px;font-size:14px;letter-spacing:0.000px;color:#858585;font-family:'Liberation Sans';font-weight:normal;font-style:normal;-webkit-text-stroke:0.5px #f5f5f5;transform:scaleX(0.9545);transform-origin:0 0;">Aufgabe</span>
<span style="left:1314.00px;top:826.00px;font-size:14px;letter-spacing:0.000px;color:#858585;font-family:'Liberation Sans';font-weight:normal;font-style:normal;-webkit-text-stroke:0.5px #f5f5f5;transform:scaleX(0.7335);transform-origin:0 0;">in</span>
<span style="left:1332.40px;top:826.00px;font-size:14px;letter-spacing:0.000px;color:#858585;font-family:'Liberation Sans';font-weight:normal;font-style:normal;-webkit-text-stroke:0.5px #f5f5f5;transform:scaleX(0.8828);transform-origin:0 0;">Ihrem</span>
<span style="left:792.50px;top:846.00px;font-size:14px;letter-spacing:0.000px;color:#858585;font-family:'Liberation Sans';font-weight:normal;font-style:normal;-webkit-text-stroke:0.5px #f5f5f5;transform:scaleX(0.8679);transform-origin:0 0;">Unternehmen.</span>
<div style="left:1113px;top:470px;width:215px;height:276px;background:rgba(0,0,0,.22);filter:blur(1.5px);border-radius:2px"></div>
<div style="left:1111px;top:468px;width:214px;height:275px;background:#f5f5f5;border:1px solid #868686;border-radius:1px"></div>
<div style="left:1112px;top:469px;width:24.5px;height:273px;background:#ebeef3;border-right:1px solid #cdd0d6"></div>
<div style="left:1137px;top:469px;width:1px;height:273px;background:#fdfdfd"></div>
<div style="left:1112px;top:491px;width:212px;height:21.5px;background:linear-gradient(#fffbe8,#fdf0c4 45%,#f9d373 53%,#f6c452 76%,#fadf98);border:1px solid #ecc98a;border-radius:2.5px"></div>
<span style="left:1145.00px;top:474.00px;font-size:11.6px;letter-spacing:-0.122px;color:#16206f;font-family:'Liberation Sans';font-weight:normal;font-style:normal;text-underline-offset:1px;text-decoration-thickness:1px;-webkit-text-stroke:0.2px #16206f;">Auss<u>c</u>hneiden</span>
<span style="left:1145.00px;top:496.00px;font-size:11.6px;letter-spacing:-0.132px;color:#16206f;font-family:'Liberation Sans';font-weight:normal;font-style:normal;text-underline-offset:1px;text-decoration-thickness:1px;-webkit-text-stroke:0.2px #16206f;">K<u>o</u>pieren</span>
<span style="left:1145.00px;top:518.00px;font-size:11.6px;letter-spacing:0.103px;color:#16206f;font-family:'Liberation Sans';font-weight:normal;font-style:normal;text-underline-offset:1px;text-decoration-thickness:1px;-webkit-text-stroke:0.2px #16206f;"><u>E</u>infügen</span>
<span style="left:1145.00px;top:542.00px;font-size:11.6px;letter-spacing:-0.047px;color:#16206f;font-family:'Liberation Sans';font-weight:normal;font-style:normal;text-underline-offset:1px;text-decoration-thickness:1px;-webkit-text-stroke:0.2px #16206f;"><u>S</u>chriftart...</span>
<span style="left:1145.00px;top:564.00px;font-size:11.6px;letter-spacing:-0.326px;color:#16206f;font-family:'Liberation Sans';font-weight:normal;font-style:normal;text-underline-offset:1px;text-decoration-thickness:1px;-webkit-text-stroke:0.2px #16206f;"><u>A</u>bsatz...</span>
<span style="left:1145.00px;top:586.00px;font-size:11.6px;letter-spacing:-0.017px;color:#16206f;font-family:'Liberation Sans';font-weight:normal;font-style:normal;text-underline-offset:1px;text-decoration-thickness:1px;-webkit-text-stroke:0.2px #16206f;"><u>A</u>ufzählungszeichen</span>
<svg style="left:1310.5px;top:588px;" width="6" height="8" viewBox="0 0 6 8"><path d="M0.5 0.5L4.5 4L0.5 7.5Z" fill="#3a4a78"/></svg>
<div style="left:1301px;top:585px;width:1px;height:14px;background:#c4c6cc"></div>
<span style="left:1145.00px;top:608.00px;font-size:11.6px;letter-spacing:-0.017px;color:#16206f;font-family:'Liberation Sans';font-weight:normal;font-style:normal;text-underline-offset:1px;text-decoration-thickness:1px;-webkit-text-stroke:0.2px #16206f;">Nu<u>m</u>merierung</span>
<svg style="left:1310.5px;top:610px;" width="6" height="8" viewBox="0 0 6 8"><path d="M0.5 0.5L4.5 4L0.5 7.5Z" fill="#3a4a78"/></svg>
<div style="left:1301px;top:607px;width:1px;height:14px;background:#c4c6cc"></div>
<span style="left:1145.00px;top:632.00px;font-size:11.6px;letter-spacing:-0.045px;color:#16206f;font-family:'Liberation Sans';font-weight:normal;font-style:normal;text-underline-offset:1px;text-decoration-thickness:1px;-webkit-text-stroke:0.2px #16206f;"><u>H</u>yperlink...</span>
<span style="left:1145.00px;top:656.00px;font-size:11.6px;letter-spacing:-0.189px;color:#16206f;font-family:'Liberation Sans';font-weight:normal;font-style:normal;text-underline-offset:1px;text-decoration-thickness:1px;-webkit-text-stroke:0.2px #16206f;">Na<u>c</u>hschlagen...</span>
<span style="left:1145.00px;top:678.00px;font-size:11.6px;letter-spacing:-0.469px;color:#16206f;font-family:'Liberation Sans';font-weight:normal;font-style:normal;text-underline-offset:1px;text-decoration-thickness:1px;-webkit-text-stroke:0.2px #16206f;">S<u>y</u>nonyme</span>
<svg style="left:1310.5px;top:680px;" width="6" height="8" viewBox="0 0 6 8"><path d="M0.5 0.5L4.5 4L0.5 7.5Z" fill="#3a4a78"/></svg>
<span style="left:1145.00px;top:700.00px;font-size:11.6px;letter-spacing:-0.200px;color:#16206f;font-family:'Liberation Sans';font-weight:normal;font-style:normal;text-underline-offset:1px;text-decoration-thickness:1px;-webkit-text-stroke:0.2px #16206f;"><u>Ü</u>bersetzen</span>
<svg style="left:1310.5px;top:702px;" width="6" height="8" viewBox="0 0 6 8"><path d="M0.5 0.5L4.5 4L0.5 7.5Z" fill="#3a4a78"/></svg>
<span style="left:1145.00px;top:724.00px;font-size:11.6px;letter-spacing:-0.054px;color:#16206f;font-family:'Liberation Sans';font-weight:normal;font-style:normal;text-underline-offset:1px;text-decoration-thickness:1px;-webkit-text-stroke:0.2px #16206f;"><u>F</u>ormatvorlagen</span>
<svg style="left:1310.5px;top:726px;" width="6" height="8" viewBox="0 0 6 8"><path d="M0.5 0.5L4.5 4L0.5 7.5Z" fill="#3a4a78"/></svg>
<div style="left:1143.5px;top:535px;width:180px;height:1px;background:#c8c9cd"></div>
<div style="left:1143.5px;top:626px;width:180px;height:1px;background:#c8c9cd"></div>
<div style="left:1143.5px;top:650px;width:180px;height:1px;background:#c8c9cd"></div>
<div style="left:1143.5px;top:717.5px;width:180px;height:1px;background:#c8c9cd"></div>
<svg style="left:1116px;top:472px;" width="16" height="16" viewBox="0 0 16 16"><path d="M4.6 1L9.6 10M11.4 1L6.4 10" stroke="#5c6474" stroke-width="1.8" fill="none"/><ellipse cx="5.2" cy="12.2" rx="2.1" ry="2.3" fill="none" stroke="#3558b8" stroke-width="1.7"/><ellipse cx="10.8" cy="12.2" rx="2.1" ry="2.3" fill="none" stroke="#3558b8" stroke-width="1.7"/></svg>
<svg style="left:1116px;top:494px;" width="16" height="16" viewBox="0 0 16 16"><path d="M0.5 0.5H6.2L8.5 2.8V10.5H0.5Z" fill="#fdfdff" stroke="#8494b8" stroke-width=".9"/><path d="M2 3.5H6M2 5.5H6.8M2 7.5H5" stroke="#4a6cc0" stroke-width=".9"/><path d="M5.5 4.5H11.8L14.5 7.2V15H5.5Z" fill="#fdfdff" stroke="#5a6ca4" stroke-width=".9"/><path d="M11.8 4.5V7.2H14.5" fill="#dfe6f4" stroke="#5a6ca4" stroke-width=".7"/><path d="M7.2 8.6H12.6M7.2 10.6H12.6M7.2 12.6H12.6" stroke="#3c62c4" stroke-width=".9"/></svg>
<svg style="left:1116px;top:516px;" width="16" height="16" viewBox="0 0 16 16"><rect x="1.5" y="2.5" width="11" height="12" rx="1" fill="#e9b456" stroke="#a87824"/><rect x="4.5" y="1" width="5" height="3" rx="1" fill="#c8ccd6" stroke="#70778a" stroke-width=".8"/><path d="M6.5 7.5H15.5V15.5H6.5Z" fill="#f4f6fb" stroke="#6a7894"/><path d="M8 10H14M8 12H14M8 14H12" stroke="#8c9ab8" stroke-width=".8"/></svg>
<span style="left:1118.50px;top:541.00px;font-size:17px;letter-spacing:0.000px;color:#2c4c9c;font-family:'Liberation Serif';font-weight:bold;font-style:normal;">A</span>
<svg style="left:1116px;top:562px;" width="16" height="16" viewBox="0 0 16 16"><path d="M3 2.5H14M1 5.5H7M1 8.5H7M1 11.5H7" stroke="#222" stroke-width="1.3"/><path d="M10.5 5V13M12.5 5V13M9 5H14" stroke="#222" stroke-width="1.1" fill="none"/><circle cx="9.8" cy="6.6" r="1.8" fill="#222"/></svg>
<svg style="left:1116px;top:584px;" width="16" height="16" viewBox="0 0 16 16"><circle cx="2.5" cy="3" r="1.4" fill="#3c5fc4"/><circle cx="2.5" cy="8" r="1.4" fill="#3c5fc4"/><circle cx="2.5" cy="13" r="1.4" fill="#3c5fc4"/><path d="M6 3H15M6 8H15M6 13H15" stroke="#222" stroke-width="1.3"/></svg>
<svg style="left:1116px;top:606px;" width="16" height="16" viewBox="0 0 16 16"><path d="M6 3H15M6 8H15M6 13H15" stroke="#222" stroke-width="1.3"/><path d="M2 1V5M1.2 6.5H3.2V8H1.2V9.5H3.2M1.2 11H3.2V15H1.2M1.5 13H3.2" stroke="#3c5fc4" stroke-width=".9" fill="none"/></svg>
<svg style="left:1116px;top:630px;" width="16" height="16" viewBox="0 0 16 16"><circle cx="7" cy="6.5" r="5.5" fill="#4fa0d8" stroke="#2c6aa8" stroke-width=".8"/><path d="M4 3C6 2 8 4 7 6S4 8 5 10.5C3 10 1.8 8 2 6Z" fill="#7cc24a"/><path d="M9 8C11 7 12 8.5 11 10Z" fill="#7cc24a"/><rect x="6" y="11" width="5" height="3.4" rx="1.6" fill="none" stroke="#606a7c" stroke-width="1.2"/><rect x="9.5" y="11" width="5" height="3.4" rx="1.6" fill="none" stroke="#606a7c" stroke-width="1.2"/></svg>
<svg style="left:1116px;top:654px;" width="16" height="16" viewBox="0 0 16 16"><rect x="1" y="3" width="3.4" height="11" fill="#6a6ad0" stroke="#3c3c8c" stroke-width=".7"/><rect x="4.6" y="2" width="3.4" height="12" fill="#8c7cd8" stroke="#3c3c8c" stroke-width=".7"/><rect x="8.2" y="3" width="3.2" height="11" fill="#5a7ad0" stroke="#3c3c8c" stroke-width=".7"/><circle cx="9.5" cy="9" r="3.2" fill="#e8f2fc" stroke="#8a7a50" stroke-width="1.1"/><path d="M11.8 11.3L15 14.8" stroke="#d09c30" stroke-width="1.8"/></svg>
<div style="left:1112px;top:760px;width:216px;height:50px;background:rgba(0,0,0,.2);filter:blur(1.5px);border-radius:4px"></div>
<div style="left:1110px;top:758px;width:216px;height:50px;background:linear-gradient(#f7f8fa,#eef1f6);border:1px solid #9a9fa8;border-radius:3.5px"></div>
<div style="left:1112.5px;top:760.5px;width:73px;height:21px;background:#eaf1fb;border:1px solid #b8cdea"></div>
<div style="left:1186px;top:760.5px;width:40px;height:21px;background:#eaf1fb;border:1px solid #b8cdea"></div>
<span style="left:1116.00px;top:764.00px;font-size:11.6px;letter-spacing:-0.742px;color:#111;font-family:'Liberation Sans';font-weight:normal;font-style:normal;">GeosansLig</span>
<svg style="left:1175.6px;top:769px;" width="6" height="4" viewBox="0 0 6 4"><path d="M0.5 0.3H5.5L3 3.3Z" fill="#4a6aa8"/></svg>
<span style="left:1188.90px;top:764.00px;font-size:11.6px;letter-spacing:-0.947px;color:#111;font-family:'Liberation Sans';font-weight:normal;font-style:normal;">11</span>
<svg style="left:1215.2px;top:769px;" width="6" height="4" viewBox="0 0 6 4"><path d="M0.5 0.3H5.5L3 3.3Z" fill="#4a6aa8"/></svg>
<span style="left:1230.20px;top:763.00px;font-size:16.5px;letter-spacing:0.000px;color:#222;font-family:'Liberation Serif';font-weight:bold;font-style:normal;">A</span>
<svg style="left:1240px;top:763.5px;" width="6" height="4" viewBox="0 0 6 4"><path d="M0.3 3.5L3 0.5L5.7 3.5Z" fill="#3c5aa8"/></svg>
<span style="left:1253.00px;top:767.00px;font-size:11px;letter-spacing:0.000px;color:#222;font-family:'Liberation Serif';font-weight:bold;font-style:normal;">A</span>
<svg style="left:1260px;top:764px;" width="6" height="4" viewBox="0 0 6 4"><path d="M0.3 0.5L3 3.5L5.7 0.5Z" fill="#3c5aa8"/></svg>
<span style="left:1274.00px;top:762.00px;font-size:18px;letter-spacing:0.000px;color:#3c62b4;font-family:'Liberation Serif';font-weight:normal;font-style:italic;">A</span>
<svg style="left:1280px;top:770px;" width="10" height="8" viewBox="0 0 10 8"><path d="M0 7C2 3 5 1 9 0.5C8 4 5 6.5 0 7Z" fill="#5a86d8"/><path d="M6 2L9.5 0" stroke="#d8a030" stroke-width="1.6"/></svg>
<svg style="left:1290.5px;top:769px;" width="6" height="4" viewBox="0 0 6 4"><path d="M0.5 0.3H5.5L3 3.3Z" fill="#4a6aa8"/></svg>
<svg style="left:1305px;top:764px;" width="16" height="14" viewBox="0 0 16 14"><defs><linearGradient id="bq" x1="0" y1="0" x2="1" y2="1"><stop offset="0" stop-color="#fff4c0"/><stop offset=".6" stop-color="#f4c45c"/><stop offset="1" stop-color="#d8901c"/></linearGradient></defs><path d="M0.5 7.2C3 6.6 5.4 5.2 7.2 3.8L10.8 8.2C9.6 10.4 8.2 12.4 6 13.6C4.6 11.2 2.6 9 0.5 7.2Z" fill="url(#bq)" stroke="#b07c1c" stroke-width=".6"/><path d="M7 3.8L9.6 2L12.6 5.8L10.8 8.2Z" fill="#e4e6ec" stroke="#7a8090" stroke-width=".6"/><path d="M9.6 2L13 0.3C14.6 0 15.8 1.4 15.2 2.8L12.6 5.8Z" fill="#4a4aa4" stroke="#2c2c74" stroke-width=".6"/></svg>
<span style="left:1118.50px;top:789.00px;font-size:13.5px;letter-spacing:0.000px;color:#111;font-family:'Liberation Serif';font-weight:bold;font-style:normal;">F</span>
<span style="left:1140.00px;top:789.00px;font-size:13.5px;letter-spacing:0.000px;color:#111;font-family:'Liberation Serif';font-weight:bold;font-style:italic;">K</span>
<svg style="left:1159px;top:789px;" width="16" height="13" viewBox="0 0 16 13"><path d="M1 1.7H15M3 4.2H13M1 6.7H15M3 9.2H13M1 11.7H15" stroke="#111" stroke-width="1.2"/></svg>
<svg style="left:1181px;top:788.5px;" width="16" height="15" viewBox="0 0 16 15"><rect x="0" y="0.5" width="9.5" height="8" fill="#f4f07a"/><text x="0.2" y="7.2" font-family="Liberation Sans" font-size="8.5" fill="#222">ab</text><path d="M8 9L13.5 2.5L15.5 4L10 10.5L7.5 11Z" fill="#e8eefa" stroke="#4a68b8" stroke-width=".8"/><rect x="0" y="11.5" width="16" height="3.5" fill="#f8ee10"/></svg>
<svg style="left:1202.3px;top:794px;" width="6" height="4" viewBox="0 0 6 4"><path d="M0.5 0.3H5.5L3 3.3Z" fill="#4a6aa8"/></svg>
<span style="left:1216.80px;top:786.00px;font-size:16.5px;letter-spacing:0.000px;color:#2c50a8;font-family:'Liberation Serif';font-weight:bold;font-style:normal;">A</span>
<div style="left:1215px;top:800px;width:16px;height:3.5px;background:#e8141c"></div>
<svg style="left:1236.4px;top:794px;" width="6" height="4" viewBox="0 0 6 4"><path d="M0.5 0.3H5.5L3 3.3Z" fill="#4a6aa8"/></svg>
<svg style="left:1249px;top:789px;" width="16" height="13" viewBox="0 0 16 13"><path d="M6 1.7H15M9 4.2H15M9 6.7H15M9 9.2H15M6 11.7H15" stroke="#111" stroke-width="1.3"/><path d="M7.5 0V13" stroke="#111" stroke-width=".8" stroke-dasharray="1 1"/><path d="M6 6.7H1.5M3.5 4.5L1 6.7L3.5 9" stroke="#3c62c4" stroke-width="1.2" fill="none"/></svg>
<svg style="left:1271px;top:789px;" width="16" height="13" viewBox="0 0 16 13"><path d="M6 1.7H15M9 4.2H15M9 6.7H15M9 9.2H15M6 11.7H15" stroke="#111" stroke-width="1.3"/><path d="M7.5 0V13" stroke="#111" stroke-width=".8" stroke-dasharray="1 1"/><path d="M0.5 6.7H5.5M3.5 4.5L6 6.7L3.5 9" stroke="#3c62c4" stroke-width="1.2" fill="none"/></svg>
<svg style="left:1294px;top:789px;" width="14" height="13" viewBox="0 0 14 13"><circle cx="1.8" cy="2" r="1.4" fill="#3c5fc4"/><circle cx="1.8" cy="6.5" r="1.4" fill="#3c5fc4"/><circle cx="1.8" cy="11" r="1.4" fill="#3c5fc4"/><path d="M5 2H13M5 6.5H13M5 11H13" stroke="#111" stroke-width="1.3"/></svg>
<svg style="left:1314.2px;top:794px;" width="6" height="4" viewBox="0 0 6 4"><path d="M0.5 0.3H5.5L3 3.3Z" fill="#4a6aa8"/></svg>
<div style="left:1772px;top:141px;width:16px;height:739px;background:#a3bfe8"></div>
<div style="left:1774px;top:166px;width:14px;height:660px;background:#7b9bcd"></div>
<div style="left:1771.5px;top:147px;width:1px;height:731px;background:#7393c8"></div>
<div style="left:1772px;top:141px;width:16px;height:8px;background:#9ab8e0"></div>
<div style="left:1776px;top:145px;width:9px;height:2px;background:#2f4a80"></div>
<div style="left:1772px;top:149px;width:16px;height:17px;background:#c3ccdf;border:1px solid #8fa3c8"></div>
<svg style="left:1774px;top:151px;" width="12" height="13" viewBox="0 0 12 13"><rect x="0.5" y="1.5" width="7" height="7" fill="#f4e8f0" stroke="#333" stroke-width="1"/><rect x="4.5" y="3.5" width="7" height="8" fill="#f4e8f0" stroke="#333" stroke-width="1"/><path d="M3 3L5 5M7 6L9 8.5" stroke="#333" stroke-width="1"/></svg>
<div style="left:1772px;top:166px;width:16px;height:17px;background:#7d9ed2"></div>
<svg style="left:1775.5px;top:172.5px;" width="10" height="6" viewBox="0 0 10 6"><path d="M0.3 5.3L5 0.7L9.7 5.3Z" fill="#3a5688"/></svg>
<div style="left:1773px;top:183px;width:15px;height:383px;background:linear-gradient(90deg,#f2f4f8,#e2e7ef 45%,#c3cbd9);border:1px solid #9aa8c0;border-radius:2px"></div>
<div style="left:1777px;top:370px;width:8.5px;height:1px;background:#7888a4"></div>
<div style="left:1777px;top:372.4px;width:8.5px;height:1px;background:#7888a4"></div>
<div style="left:1777px;top:374.8px;width:8.5px;height:1px;background:#7888a4"></div>
<div style="left:1777px;top:377.2px;width:8.5px;height:1px;background:#7888a4"></div>
<svg style="left:1775.5px;top:816px;" width="10" height="6" viewBox="0 0 10 6"><path d="M0.3 0.5L5 5.2L9.7 0.5Z" fill="#3a5688"/></svg>
<svg style="left:1776px;top:831px;" width="8" height="8" viewBox="0 0 8 8"><path d="M1 3.6L3.7 0.8L6.4 3.6ZM1 7L3.7 4.2L6.4 7Z" fill="#111"/></svg>
<svg style="left:1775px;top:847px;" width="9" height="9" viewBox="0 0 9 9"><defs><radialGradient id="nb" cx=".4" cy=".35" r=".6"><stop offset="0" stop-color="#f4f4f4"/><stop offset="1" stop-color="#8a8e94"/></radialGradient></defs><circle cx="4.5" cy="4.5" r="3.3" fill="url(#nb)" stroke="#1a1a1a" stroke-width="1"/></svg>
<svg style="left:1776px;top:865px;" width="8" height="8" viewBox="0 0 8 8"><path d="M1 1L3.7 3.8L6.4 1ZM1 4.4L3.7 7.2L6.4 4.4Z" fill="#111"/></svg>
<div style="left:349px;top:878px;width:1439px;height:2px;background:#dfe6f0"></div>
<div style="left:1771.5px;top:877.5px;width:16.5px;height:1px;background:#6f8cc0"></div>
<div style="left:0px;top:879px;width:1788px;height:1px;background:#cfcfcf"></div>
<div style="left:349px;top:1px;width:1439px;height:25px;background:linear-gradient(#ececec,#f5f5f5 25%,#f4f4f4)"></div>
<div style="left:589px;top:8px;width:12px;height:13px;background:#bdbdbd;filter:blur(3.5px);opacity:.55"></div>
<div style="left:986px;top:8px;width:12px;height:13px;background:#bdbdbd;filter:blur(3.5px);opacity:.55"></div>
<div style="left:1350px;top:6px;width:96px;height:14px;background:#b9b9b9;filter:blur(4px);opacity:.75"></div>
<div style="left:349px;top:26px;width:1142px;height:1px;background:#5d6b7c"></div>
<span style="left:597.00px;top:9.00px;font-size:11.6px;letter-spacing:0.330px;color:#1c1c1c;font-family:'Liberation Sans';font-weight:normal;font-style:normal;">Swing-Anschreiben-green.doc [Kompatibilitätsmodus] - Microsoft Word</span>
<svg style="left:380px;top:2px;" width="104" height="24" viewBox="0 0 104 24"><path d="M2 1.5H90A10.5 10.5 0 0 1 90 22.5H22C14 22.5 14 1.5 2 1.5Z" fill="#f1f2f4" stroke="#9ba1ab" stroke-width="1"/></svg>
<svg style="left:402px;top:7px;" width="14" height="14" viewBox="0 0 14 14"><defs><linearGradient id="sv" x1="0" y1="0" x2="1" y2="1"><stop offset="0" stop-color="#7676e8"/><stop offset="1" stop-color="#2a2a96"/></linearGradient></defs><path d="M0.5 0.5H13.5V13.5H2L0.5 12Z" fill="url(#sv)" stroke="#3a3aa6"/><rect x="3" y="1" width="8" height="6" fill="#f4f6fc"/><rect x="3.5" y="9.2" width="7" height="4.3" fill="#1c1c58"/><rect x="5" y="10.4" width="2.2" height="2.6" fill="#ececf6"/></svg>
<svg style="left:425px;top:8px;" width="13" height="12" viewBox="0 0 13 12"><path d="M1 1V6H6" fill="none" stroke="#a3b7df" stroke-width="2"/><path d="M2 5.5C4 2 9 1.5 10.5 5C11.5 8 9 10.5 6.5 11" fill="none" stroke="#a3b7df" stroke-width="2"/></svg>
<svg style="left:442.5px;top:11.5px;" width="5" height="4" viewBox="0 0 5 4"><path d="M0.5 0.3H4.5L2.5 3.3Z" fill="#b3bed2"/></svg>
<svg style="left:456px;top:7px;" width="14" height="14" viewBox="0 0 14 14"><path d="M10.6 5.2A4.6 4.6 0 1 1 4.2 3.6" fill="none" stroke="#a3b7df" stroke-width="2.2"/><path d="M7.2 0.6L11.8 1.6L10.4 6.4Z" fill="#a3b7df"/></svg>
<div style="left:489.5px;top:10.5px;width:6px;height:1.3px;background:#2c4a9c"></div>
<svg style="left:489.5px;top:12.5px;" width="6" height="4" viewBox="0 0 6 4"><path d="M0.5 0.3H5.5L3 3.3Z" fill="#2c4a9c"/></svg>
<div style="left:349px;top:27px;width:1439px;height:25px;background:#bdd7f5"></div>
<div style="left:1077.5px;top:3px;width:79.5px;height:23.6px;background:linear-gradient(#eeeeee,#f2eee6 35%,#f4e8cc 65%,#f6d892 86%,#f2b94a);border-left:1px solid #dcdcdc;border-right:1px solid #dcdcdc"></div>
<div style="left:1077.5px;top:27px;width:80px;height:25px;background:linear-gradient(#c4dbf6,#bdd7f5);border-left:1px solid #aecbee;border-right:1px solid #aecbee"></div>
<span style="left:1084.00px;top:10.00px;font-size:11.4px;letter-spacing:0.189px;color:#1c1c1c;font-family:'Liberation Sans';font-weight:normal;font-style:normal;">Textfeldtools</span>
<div style="left:397.5px;top:28.5px;width:48px;height:24px;background:linear-gradient(#eef4fc,#e3ecf8 60%,#dfe9f6);border:1px solid #b3cceb;border-bottom:none;border-radius:3.5px 3.5px 0 0"></div>
<span style="left:409.60px;top:35.00px;font-size:11.4px;letter-spacing:-0.191px;color:#15428b;font-family:'Liberation Sans';font-weight:normal;font-style:normal;">Start</span>
<span style="left:461.50px;top:35.00px;font-size:11.4px;letter-spacing:0.162px;color:#15428b;font-family:'Liberation Sans';font-weight:normal;font-style:normal;">Einfügen</span>
<span style="left:538.40px;top:35.00px;font-size:11.4px;letter-spacing:0.082px;color:#15428b;font-family:'Liberation Sans';font-weight:normal;font-style:normal;">Seitenlayout</span>
<span style="left:631.00px;top:35.00px;font-size:11.4px;letter-spacing:-0.046px;color:#15428b;font-family:'Liberation Sans';font-weight:normal;font-style:normal;">Verweise</span>
<span style="left:706.00px;top:35.00px;font-size:11.4px;letter-spacing:0.152px;color:#15428b;font-family:'Liberation Sans';font-weight:normal;font-style:normal;">Sendungen</span>
<span style="left:795.00px;top:35.00px;font-size:11.4px;letter-spacing:0.289px;color:#15428b;font-family:'Liberation Sans';font-weight:normal;font-style:normal;">Überprüfen</span>
<span style="left:884.00px;top:35.00px;font-size:11.4px;letter-spacing:0.073px;color:#15428b;font-family:'Liberation Sans';font-weight:normal;font-style:normal;">Ansicht</span>
<span style="left:951.00px;top:35.00px;font-size:11.4px;letter-spacing:0.056px;color:#15428b;font-family:'Liberation Sans';font-weight:normal;font-style:normal;">Add-Ins</span>
<span style="left:1020.00px;top:35.00px;font-size:11.4px;letter-spacing:0.122px;color:#15428b;font-family:'Liberation Sans';font-weight:normal;font-style:normal;">Acrobat</span>
<span style="left:1098.00px;top:35.00px;font-size:11.4px;letter-spacing:-0.116px;color:#15428b;font-family:'Liberation Sans';font-weight:normal;font-style:normal;">Format</span>
<div style="left:349.5px;top:50.5px;width:1439px;height:90px;background:linear-gradient(#dbe6f5,#cfdef2 18%,#cddcf0 60%,#d6e8f8 90%,#dff3fc);border:1px solid #8fb0d4;border-right:none;border-radius:3px 0 0 3px"></div>
<div style="left:350.5px;top:51.5px;width:1438px;height:88px;border:1px solid #dcf0fc;border-right:none;border-radius:3px 0 0 3px"></div>
<div style="left:349px;top:140.5px;width:1439px;height:1.5px;background:linear-gradient(#a9c2e6,#9ab8e0)"></div>
<div style="left:352.5px;top:53px;width:184px;height:85.5px;border:1px solid rgba(255,255,255,.75);border-radius:4px;border-top:none;border-left:none"></div>
<div style="left:353.5px;top:53.5px;width:181.5px;height:84px;background:linear-gradient(#dfe9f6 0,#d8e4f3 13px,#cbdbef 14px,#d2e0f2 68px,#c2d9f2 68.5px,#c0d8f2 84px);border:1px solid #aec7e8;border-radius:3.5px"></div>
<span style="left:394.30px;top:125.00px;font-size:11.3px;letter-spacing:0.066px;color:#3764a8;font-family:'Liberation Sans';font-weight:normal;font-style:normal;">Zwischenablage</span>
<svg style="left:522.5px;top:126px;" width="9" height="9" viewBox="0 0 9 9"><path d="M0.5 6V0.5H6" fill="none" stroke="#6d8dbd" stroke-width="1"/><path d="M3.5 3.5L7.5 7.5M7.5 4V7.5H4" fill="none" stroke="#5f7fb5" stroke-width="1.2"/></svg>
<div style="left:538.5px;top:53px;width:263.5px;height:85.5px;border:1px solid rgba(255,255,255,.75);border-radius:4px;border-top:none;border-left:none"></div>
<div style="left:539.5px;top:53.5px;width:261px;height:84px;background:linear-gradient(#dfe9f6 0,#d8e4f3 13px,#cbdbef 14px,#d2e0f2 68px,#c2d9f2 68.5px,#c0d8f2 84px);border:1px solid #aec7e8;border-radius:3.5px"></div>
<span style="left:637.60px;top:125.00px;font-size:11.3px;letter-spacing:0.100px;color:#3764a8;font-family:'Liberation Sans';font-weight:normal;font-style:normal;">Schriftart</span>
<svg style="left:788px;top:126px;" width="9" height="9" viewBox="0 0 9 9"><path d="M0.5 6V0.5H6" fill="none" stroke="#6d8dbd" stroke-width="1"/><path d="M3.5 3.5L7.5 7.5M7.5 4V7.5H4" fill="none" stroke="#5f7fb5" stroke-width="1.2"/></svg>
<div style="left:803.7px;top:53px;width:210.1px;height:85.5px;border:1px solid rgba(255,255,255,.75);border-radius:4px;border-top:none;border-left:none"></div>
<div style="left:804.7px;top:53.5px;width:207.6px;height:84px;background:linear-gradient(#dfe9f6 0,#d8e4f3 13px,#cbdbef 14px,#d2e0f2 68px,#c2d9f2 68.5px,#c0d8f2 84px);border:1px solid #aec7e8;border-radius:3.5px"></div>
<span style="left:882.50px;top:125.00px;font-size:11.3px;letter-spacing:-0.349px;color:#3764a8;font-family:'Liberation Sans';font-weight:normal;font-style:normal;">Absatz</span>
<svg style="left:999.8px;top:126px;" width="9" height="9" viewBox="0 0 9 9"><path d="M0.5 6V0.5H6" fill="none" stroke="#6d8dbd" stroke-width="1"/><path d="M3.5 3.5L7.5 7.5M7.5 4V7.5H4" fill="none" stroke="#5f7fb5" stroke-width="1.2"/></svg>
<div style="left:1015.5px;top:53px;width:620px;height:85.5px;border:1px solid rgba(255,255,255,.75);border-radius:4px;border-top:none;border-left:none"></div>
<div style="left:1016.5px;top:53.5px;width:617.5px;height:84px;background:linear-gradient(#dfe9f6 0,#d8e4f3 13px,#cbdbef 14px,#d2e0f2 68px,#c2d9f2 68.5px,#c0d8f2 84px);border:1px solid #aec7e8;border-radius:3.5px"></div>
<span style="left:1276.00px;top:125.00px;font-size:11.3px;letter-spacing:0.121px;color:#3764a8;font-family:'Liberation Sans';font-weight:normal;font-style:normal;">Formatvorlagen</span>
<svg style="left:1621.5px;top:126px;" width="9" height="9" viewBox="0 0 9 9"><path d="M0.5 6V0.5H6" fill="none" stroke="#6d8dbd" stroke-width="1"/><path d="M3.5 3.5L7.5 7.5M7.5 4V7.5H4" fill="none" stroke="#5f7fb5" stroke-width="1.2"/></svg>
<div style="left:1637.4px;top:53px;width:96.7px;height:85.5px;border:1px solid rgba(255,255,255,.75);border-radius:4px;border-top:none;border-left:none"></div>
<div style="left:1638.4px;top:53.5px;width:94.2px;height:84px;background:linear-gradient(#dfe9f6 0,#d8e4f3 13px,#cbdbef 14px,#d2e0f2 68px,#c2d9f2 68.5px,#c0d8f2 84px);border:1px solid #aec7e8;border-radius:3.5px"></div>
<span style="left:1658.00px;top:125.00px;font-size:11.3px;letter-spacing:0.127px;color:#3764a8;font-family:'Liberation Sans';font-weight:normal;font-style:normal;">Bearbeiten</span>
<svg style="left:369px;top:57px;" width="28" height="32" viewBox="0 0 28 32"><rect x="1.5" y="4.5" width="21" height="23" rx="1.5" fill="#f2c466" stroke="#c99a3c"/><path d="M7 5.5V3.5H10C10 0.5 14 0.5 14 3.5H17V5.5Z" fill="#f4f4f4" stroke="#8a7a5a" stroke-width=".8"/><path d="M10.5 12.5H22L26.5 17V30.5H10.5Z" fill="#fcfcfd" stroke="#a8b0c0" stroke-width=".9"/><path d="M22 12.5V17H26.5" fill="#e4e8f0" stroke="#a8b0c0" stroke-width=".8"/><path d="M13 19.5H24M13 22H24M13 24.5H24M13 27H24" stroke="#c8ccd6" stroke-width=".9"/></svg>
<span style="left:359.40px;top:95.00px;font-size:11.5px;letter-spacing:0.171px;color:#15428b;font-family:'Liberation Sans';font-weight:normal;font-style:normal;-webkit-text-stroke:0.08px #15428b;">Einfügen</span>
<svg style="left:379px;top:111px;" width="6" height="4" viewBox="0 0 6 4"><path d="M0.5 0.3H5.5L3 3.3Z" fill="#3a5a9a"/></svg>
<svg style="left:411.5px;top:58px;" width="16" height="16" viewBox="0 0 16 16"><path d="M4.6 1L9.6 10M11.4 1L6.4 10" stroke="#5c6474" stroke-width="1.8" fill="none"/><ellipse cx="5.2" cy="12.2" rx="2.1" ry="2.3" fill="none" stroke="#3558b8" stroke-width="1.7"/><ellipse cx="10.8" cy="12.2" rx="2.1" ry="2.3" fill="none" stroke="#3558b8" stroke-width="1.7"/></svg>
<svg style="left:411.5px;top:80px;" width="16" height="16" viewBox="0 0 16 16"><path d="M0.5 0.5H6.2L8.5 2.8V10.5H0.5Z" fill="#fdfdff" stroke="#8494b8" stroke-width=".9"/><path d="M2 3.5H6M2 5.5H6.8M2 7.5H5" stroke="#4a6cc0" stroke-width=".9"/><path d="M5.5 4.5H11.8L14.5 7.2V15H5.5Z" fill="#fdfdff" stroke="#5a6ca4" stroke-width=".9"/><path d="M11.8 4.5V7.2H14.5" fill="#dfe6f4" stroke="#5a6ca4" stroke-width=".7"/><path d="M7.2 8.6H12.6M7.2 10.6H12.6M7.2 12.6H12.6" stroke="#3c62c4" stroke-width=".9"/></svg>
<svg style="left:411.5px;top:103px;" width="16" height="14" viewBox="0 0 16 14"><defs><linearGradient id="bq" x1="0" y1="0" x2="1" y2="1"><stop offset="0" stop-color="#fff4c0"/><stop offset=".6" stop-color="#f4c45c"/><stop offset="1" stop-color="#d8901c"/></linearGradient></defs><path d="M0.5 7.2C3 6.6 5.4 5.2 7.2 3.8L10.8 8.2C9.6 10.4 8.2 12.4 6 13.6C4.6 11.2 2.6 9 0.5 7.2Z" fill="url(#bq)" stroke="#b07c1c" stroke-width=".6"/><path d="M7 3.8L9.6 2L12.6 5.8L10.8 8.2Z" fill="#e4e6ec" stroke="#7a8090" stroke-width=".6"/><path d="M9.6 2L13 0.3C14.6 0 15.8 1.4 15.2 2.8L12.6 5.8Z" fill="#4a4aa4" stroke="#2c2c74" stroke-width=".6"/></svg>
<span style="left:431.00px;top:61.00px;font-size:11.5px;letter-spacing:-0.023px;color:#15428b;font-family:'Liberation Sans';font-weight:normal;font-style:normal;-webkit-text-stroke:0.08px #15428b;">Ausschneiden</span>
<span style="left:431.00px;top:83.00px;font-size:11.5px;letter-spacing:-0.035px;color:#15428b;font-family:'Liberation Sans';font-weight:normal;font-style:normal;-webkit-text-stroke:0.08px #15428b;">Kopieren</span>
<span style="left:431.00px;top:105.00px;font-size:11.5px;letter-spacing:0.103px;color:#15428b;font-family:'Liberation Sans';font-weight:normal;font-style:normal;-webkit-text-stroke:0.08px #15428b;">Format übertragen</span>
<div style="left:543.4px;top:63.8px;width:117.2px;height:20.8px;background:linear-gradient(#e6edf7,#eef3fa);border:1px solid #b3c8e4"></div>
<div style="left:661.4px;top:63.8px;width:60px;height:20.8px;background:linear-gradient(#e6edf7,#eef3fa);border:1px solid #b3c8e4"></div>
<span style="left:546.50px;top:68.00px;font-size:11.6px;letter-spacing:-0.186px;color:#111;font-family:'Liberation Sans';font-weight:normal;font-style:normal;">GeosansLight</span>
<svg style="left:650px;top:72.7px;" width="6" height="4" viewBox="0 0 6 4"><path d="M0.5 0.3H5.5L3 3.3Z" fill="#4a6aa8"/></svg>
<span style="left:664.00px;top:68.00px;font-size:11.6px;letter-spacing:-1.647px;color:#111;font-family:'Liberation Sans';font-weight:normal;font-style:normal;">11</span>
<svg style="left:710.6px;top:72.7px;" width="6" height="4" viewBox="0 0 6 4"><path d="M0.5 0.3H5.5L3 3.3Z" fill="#4a6aa8"/></svg>
<div style="left:725.5px;top:63.8px;width:44.3px;height:20.8px;background:linear-gradient(#dfe9f6,#d3e0f1 48%,#c6d6eb 50%,#d2e0f2);border:1px solid #a9bfdd;border-radius:3px"></div>
<div style="left:747.4px;top:64.8px;width:1px;height:18.8px;background:linear-gradient(#c7d6ea,#b4c8e2 50%,#c7d6ea)"></div>
<div style="left:748.4px;top:64.8px;width:1px;height:18.8px;background:rgba(255,255,255,.45)"></div>
<div style="left:773px;top:63.8px;width:24px;height:20.8px;background:linear-gradient(#dfe9f6,#d3e0f1 48%,#c6d6eb 50%,#d2e0f2);border:1px solid #a9bfdd;border-radius:3px"></div>
<span style="left:730.20px;top:67.00px;font-size:16.5px;letter-spacing:0.000px;color:#222;font-family:'Liberation Serif';font-weight:bold;font-style:normal;">A</span>
<svg style="left:739.3px;top:66.8px;" width="6" height="4" viewBox="0 0 6 4"><path d="M0.3 3.5L3 0.5L5.7 3.5Z" fill="#3c5aa8"/></svg>
<span style="left:752.60px;top:71.00px;font-size:10.8px;letter-spacing:0.000px;color:#222;font-family:'Liberation Serif';font-weight:bold;font-style:normal;">A</span>
<svg style="left:760px;top:67.5px;" width="6" height="4" viewBox="0 0 6 4"><path d="M0.3 0.5L3 3.5L5.7 0.5Z" fill="#3c5aa8"/></svg>
<svg style="left:777px;top:66px;" width="17" height="16" viewBox="0 0 17 16"><rect x="0.5" y="0.5" width="11" height="7.5" fill="#f8f9fc" stroke="#7a8498" stroke-width=".8"/><text x="1.5" y="6.6" font-family="Liberation Sans" font-size="6.5" fill="#222">Aa</text><path d="M5 11.5L11 6.5L15.5 9.5L9.5 14.5Z" fill="#f4f4f8" stroke="#6a7288" stroke-width=".9"/></svg>
<div style="left:543.4px;top:92.8px;width:183.1px;height:20.8px;background:linear-gradient(#dfe9f6,#d3e0f1 48%,#c6d6eb 50%,#d2e0f2);border:1px solid #a9bfdd;border-radius:3px"></div>
<div style="left:565.2px;top:93.8px;width:1px;height:18.8px;background:linear-gradient(#c7d6ea,#b4c8e2 50%,#c7d6ea)"></div>
<div style="left:566.2px;top:93.8px;width:1px;height:18.8px;background:rgba(255,255,255,.45)"></div>
<div style="left:589.2px;top:93.8px;width:1px;height:18.8px;background:linear-gradient(#c7d6ea,#b4c8e2 50%,#c7d6ea)"></div>
<div style="left:590.2px;top:93.8px;width:1px;height:18.8px;background:rgba(255,255,255,.45)"></div>
<div style="left:624.4px;top:93.8px;width:1px;height:18.8px;background:linear-gradient(#c7d6ea,#b4c8e2 50%,#c7d6ea)"></div>
<div style="left:625.4px;top:93.8px;width:1px;height:18.8px;background:rgba(255,255,255,.45)"></div>
<div style="left:648.4px;top:93.8px;width:1px;height:18.8px;background:linear-gradient(#c7d6ea,#b4c8e2 50%,#c7d6ea)"></div>
<div style="left:649.4px;top:93.8px;width:1px;height:18.8px;background:rgba(255,255,255,.45)"></div>
<div style="left:672.6px;top:93.8px;width:1px;height:18.8px;background:linear-gradient(#c7d6ea,#b4c8e2 50%,#c7d6ea)"></div>
<div style="left:673.6px;top:93.8px;width:1px;height:18.8px;background:rgba(255,255,255,.45)"></div>
<div style="left:696.6px;top:93.8px;width:1px;height:18.8px;background:linear-gradient(#c7d6ea,#b4c8e2 50%,#c7d6ea)"></div>
<div style="left:697.6px;top:93.8px;width:1px;height:18.8px;background:rgba(255,255,255,.45)"></div>
<div style="left:730.5px;top:92.8px;width:66.5px;height:20.8px;background:linear-gradient(#dfe9f6,#d3e0f1 48%,#c6d6eb 50%,#d2e0f2);border:1px solid #a9bfdd;border-radius:3px"></div>
<div style="left:763.6px;top:93.8px;width:1px;height:18.8px;background:linear-gradient(#c7d6ea,#b4c8e2 50%,#c7d6ea)"></div>
<div style="left:764.6px;top:93.8px;width:1px;height:18.8px;background:rgba(255,255,255,.45)"></div>
<span style="left:550.50px;top:97.00px;font-size:14px;letter-spacing:0.000px;color:#111;font-family:'Liberation Serif';font-weight:bold;font-style:normal;">F</span>
<span style="left:572.50px;top:97.00px;font-size:14px;letter-spacing:0.000px;color:#111;font-family:'Liberation Serif';font-weight:bold;font-style:italic;">K</span>
<span style="left:596.80px;top:97.00px;font-size:13.5px;letter-spacing:0.000px;color:#111;font-family:'Liberation Serif';font-weight:bold;font-style:normal;text-decoration:underline;text-underline-offset:1.5px;">U</span>
<svg style="left:615.4px;top:101.5px;" width="6" height="4" viewBox="0 0 6 4"><path d="M0.5 0.3H5.5L3 3.3Z" fill="#4a6aa8"/></svg>
<span style="left:628.80px;top:99.00px;font-size:11.5px;letter-spacing:0.116px;color:#333;font-family:'Liberation Serif';font-weight:normal;font-style:normal;text-decoration:line-through;">abc</span>
<span style="left:655.50px;top:97.00px;font-size:13.5px;letter-spacing:0.000px;color:#111;font-family:'Liberation Sans';font-weight:bold;font-style:normal;">x</span>
<span style="left:663.00px;top:104.00px;font-size:7px;letter-spacing:0.000px;color:#2c50a8;font-family:'Liberation Sans';font-weight:bold;font-style:normal;">2</span>
<span style="left:679.50px;top:97.00px;font-size:13.5px;letter-spacing:0.000px;color:#111;font-family:'Liberation Sans';font-weight:bold;font-style:normal;">x</span>
<span style="left:687.20px;top:96.00px;font-size:7px;letter-spacing:0.000px;color:#2c50a8;font-family:'Liberation Sans';font-weight:bold;font-style:normal;">2</span>
<span style="left:700.50px;top:97.00px;font-size:14px;letter-spacing:-2.125px;color:#222;font-family:'Liberation Serif';font-weight:bold;font-style:normal;">Aa</span>
<svg style="left:717.3px;top:101.5px;" width="6" height="4" viewBox="0 0 6 4"><path d="M0.5 0.3H5.5L3 3.3Z" fill="#4a6aa8"/></svg>
<svg style="left:733.8px;top:95.5px;" width="16" height="15" viewBox="0 0 16 15"><rect x="0" y="0.5" width="9.5" height="8" fill="#f4f07a"/><text x="0.2" y="7.2" font-family="Liberation Sans" font-size="8.5" fill="#222">ab</text><path d="M8 9L13.5 2.5L15.5 4L10 10.5L7.5 11Z" fill="#e8eefa" stroke="#4a68b8" stroke-width=".8"/><rect x="0" y="11.5" width="16" height="3.5" fill="#f8ee10"/></svg>
<svg style="left:754.3px;top:101.5px;" width="6" height="4" viewBox="0 0 6 4"><path d="M0.5 0.3H5.5L3 3.3Z" fill="#4a6aa8"/></svg>
<span style="left:767.60px;top:93.00px;font-size:16.5px;letter-spacing:0.000px;color:#2c50a8;font-family:'Liberation Serif';font-weight:bold;font-style:normal;">A</span>
<div style="left:766px;top:107.2px;width:18px;height:3.6px;background:#e8141c"></div>
<svg style="left:787.4px;top:101.5px;" width="6" height="4" viewBox="0 0 6 4"><path d="M0.5 0.3H5.5L3 3.3Z" fill="#4a6aa8"/></svg>
<div style="left:808.4px;top:63.8px;width:97.8px;height:20.8px;background:linear-gradient(#dfe9f6,#d3e0f1 48%,#c6d6eb 50%,#d2e0f2);border:1px solid #a9bfdd;border-radius:3px"></div>
<div style="left:841.2px;top:64.8px;width:1px;height:18.8px;background:linear-gradient(#c7d6ea,#b4c8e2 50%,#c7d6ea)"></div>
<div style="left:842.2px;top:64.8px;width:1px;height:18.8px;background:rgba(255,255,255,.45)"></div>
<div style="left:876.5px;top:64.8px;width:1px;height:18.8px;background:linear-gradient(#c7d6ea,#b4c8e2 50%,#c7d6ea)"></div>
<div style="left:877.5px;top:64.8px;width:1px;height:18.8px;background:rgba(255,255,255,.45)"></div>
<div style="left:910.8px;top:63.8px;width:43.8px;height:20.8px;background:linear-gradient(#dfe9f6,#d3e0f1 48%,#c6d6eb 50%,#d2e0f2);border:1px solid #a9bfdd;border-radius:3px"></div>
<div style="left:932.5px;top:64.8px;width:1px;height:18.8px;background:linear-gradient(#c7d6ea,#b4c8e2 50%,#c7d6ea)"></div>
<div style="left:933.5px;top:64.8px;width:1px;height:18.8px;background:rgba(255,255,255,.45)"></div>
<div style="left:958.3px;top:63.8px;width:23.5px;height:20.8px;background:linear-gradient(#dfe9f6,#d3e0f1 48%,#c6d6eb 50%,#d2e0f2);border:1px solid #a9bfdd;border-radius:3px"></div>
<div style="left:985.4px;top:63.8px;width:23.2px;height:20.8px;background:linear-gradient(#dfe9f6,#d3e0f1 48%,#c6d6eb 50%,#d2e0f2);border:1px solid #a9bfdd;border-radius:3px"></div>
<svg style="left:812.6px;top:67.5px;" width="14" height="13" viewBox="0 0 14 13"><circle cx="1.8" cy="2" r="1.4" fill="#3c5fc4"/><circle cx="1.8" cy="6.5" r="1.4" fill="#3c5fc4"/><circle cx="1.8" cy="11" r="1.4" fill="#3c5fc4"/><path d="M5 2H13M5 6.5H13M5 11H13" stroke="#111" stroke-width="1.3"/></svg>
<svg style="left:832.3px;top:72.7px;" width="6" height="4" viewBox="0 0 6 4"><path d="M0.5 0.3H5.5L3 3.3Z" fill="#4a6aa8"/></svg>
<svg style="left:847px;top:67px;" width="15" height="14" viewBox="0 0 15 14"><path d="M5.5 2.5H14M5.5 7H14M5.5 11.5H14" stroke="#111" stroke-width="1.3"/><path d="M1.8 0.5V4M0.8 5.5H2.8V7H0.8V8.6H2.8M0.8 10H2.8V13.4H0.8M1.2 11.7H2.8" stroke="#3c5fc4" stroke-width=".9" fill="none"/></svg>
<svg style="left:867.2px;top:72.7px;" width="6" height="4" viewBox="0 0 6 4"><path d="M0.5 0.3H5.5L3 3.3Z" fill="#4a6aa8"/></svg>
<svg style="left:880.5px;top:66.5px;" width="16" height="15" viewBox="0 0 16 15"><path d="M1.5 0.5V3" stroke="#3c5fc4" stroke-width="1"/><path d="M4 2H14" stroke="#111" stroke-width="1.2"/><path d="M5 5.5H6.5V7.5H5Z" fill="#3c5fc4"/><path d="M8.5 7H15" stroke="#111" stroke-width="1.2" stroke-dasharray="3 1"/><path d="M9 10V13" stroke="#3c5fc4" stroke-width="1"/><path d="M11 12H15" stroke="#111" stroke-width="1.2" stroke-dasharray="2 1"/></svg>
<svg style="left:898.2px;top:72.7px;" width="5" height="4" viewBox="0 0 5 4"><path d="M0.5 0.3H4.5L2.5 3.3Z" fill="#4a6aa8"/></svg>
<svg style="left:914.5px;top:67.5px;" width="16" height="13" viewBox="0 0 16 13"><path d="M6 1.7H15M9 4.2H15M9 6.7H15M9 9.2H15M6 11.7H15" stroke="#111" stroke-width="1.3"/><path d="M7.5 0V13" stroke="#111" stroke-width=".8" stroke-dasharray="1 1"/><path d="M6 6.7H1.5M3.5 4.5L1 6.7L3.5 9" stroke="#3c62c4" stroke-width="1.2" fill="none"/></svg>
<svg style="left:936.5px;top:67.5px;" width="16" height="13" viewBox="0 0 16 13"><path d="M6 1.7H15M9 4.2H15M9 6.7H15M9 9.2H15M6 11.7H15" stroke="#111" stroke-width="1.3"/><path d="M7.5 0V13" stroke="#111" stroke-width=".8" stroke-dasharray="1 1"/><path d="M0.5 6.7H5.5M3.5 4.5L6 6.7L3.5 9" stroke="#3c62c4" stroke-width="1.2" fill="none"/></svg>
<span style="left:961.50px;top:66.00px;font-size:10px;letter-spacing:0.000px;color:#2c50a8;font-family:'Liberation Serif';font-weight:bold;font-style:normal;">A</span>
<span style="left:961.80px;top:75.00px;font-size:10px;letter-spacing:0.000px;color:#c03030;font-family:'Liberation Serif';font-weight:bold;font-style:normal;">Z</span>
<svg style="left:971px;top:66.5px;" width="8" height="16" viewBox="0 0 8 16"><path d="M4 0.5V13" stroke="#111" stroke-width="1.3"/><path d="M0.8 10.5L4 15L7.2 10.5Z" fill="#111"/></svg>
<span style="left:991.30px;top:68.00px;font-size:17px;letter-spacing:0.000px;color:#111;font-family:'Liberation Sans';font-weight:bold;font-style:normal;">¶</span>
<div style="left:808.4px;top:92.8px;width:92.2px;height:20.8px;background:linear-gradient(#dfe9f6,#d3e0f1 48%,#c6d6eb 50%,#d2e0f2);border:1px solid #a9bfdd;border-radius:3px"></div>
<div style="left:830.2px;top:93.8px;width:1px;height:18.8px;background:linear-gradient(#c7d6ea,#b4c8e2 50%,#c7d6ea)"></div>
<div style="left:831.2px;top:93.8px;width:1px;height:18.8px;background:rgba(255,255,255,.45)"></div>
<div style="left:854.2px;top:93.8px;width:1px;height:18.8px;background:linear-gradient(#c7d6ea,#b4c8e2 50%,#c7d6ea)"></div>
<div style="left:855.2px;top:93.8px;width:1px;height:18.8px;background:rgba(255,255,255,.45)"></div>
<div style="left:878.4px;top:93px;width:22px;height:20.4px;background:linear-gradient(#fbdba6,#fcc878 45%,#fdb759 50%,#fdd590);border:1px solid #d8a350;border-radius:0 3px 3px 0"></div>
<svg style="left:812.5px;top:97.5px;" width="15" height="12" viewBox="0 0 15 12"><path d="M0.5 1H14M0.5 3.4H10M0.5 5.8H14M0.5 8.2H10M0.5 10.6H14" stroke="#111" stroke-width="1.25"/></svg>
<svg style="left:835.3px;top:97.5px;" width="15" height="12" viewBox="0 0 15 12"><path d="M0.5 1H14.5M3 3.4H12M0.5 5.8H14.5M3 8.2H12M0.5 10.6H14.5" stroke="#111" stroke-width="1.25"/></svg>
<svg style="left:859.3px;top:97.5px;" width="15" height="12" viewBox="0 0 15 12"><path d="M0.5 1H14.5M4.5 3.4H14.5M0.5 5.8H14.5M4.5 8.2H14.5M0.5 10.6H14.5" stroke="#111" stroke-width="1.25"/></svg>
<svg style="left:882.3px;top:97.5px;" width="15" height="12" viewBox="0 0 15 12"><path d="M0.5 1H14.5M0.5 3.4H14.5M0.5 5.8H14.5M0.5 8.2H14.5M0.5 10.6H14.5" stroke="#111" stroke-width="1.25"/></svg>
<div style="left:904.4px;top:92.8px;width:31.1px;height:20.8px;background:linear-gradient(#dfe9f6,#d3e0f1 48%,#c6d6eb 50%,#d2e0f2);border:1px solid #a9bfdd;border-radius:3px"></div>
<svg style="left:908.5px;top:96px;" width="16" height="15" viewBox="0 0 16 15"><path d="M3 1V14M0.8 3.8L3 0.8L5.2 3.8M0.8 11.2L3 14.2L5.2 11.2" stroke="#3c62c4" stroke-width="1.2" fill="none"/><path d="M7.5 3H15.5M7.5 6.2H15.5M7.5 9.4H15.5M7.5 12.6H15.5" stroke="#111" stroke-width="1.25"/></svg>
<svg style="left:925.6px;top:101.5px;" width="6" height="4" viewBox="0 0 6 4"><path d="M0.5 0.3H5.5L3 3.3Z" fill="#4a6aa8"/></svg>
<div style="left:939.3px;top:92.8px;width:66.5px;height:20.8px;background:linear-gradient(#dfe9f6,#d3e0f1 48%,#c6d6eb 50%,#d2e0f2);border:1px solid #a9bfdd;border-radius:3px"></div>
<div style="left:972.1px;top:93.8px;width:1px;height:18.8px;background:linear-gradient(#c7d6ea,#b4c8e2 50%,#c7d6ea)"></div>
<div style="left:973.1px;top:93.8px;width:1px;height:18.8px;background:rgba(255,255,255,.45)"></div>
<svg style="left:943px;top:95px;" width="17" height="16" viewBox="0 0 17 16"><path d="M5.5 4.5L10.5 1.5L14 7L7 11.5L3 8.5Z" fill="#f6f8fc" stroke="#4a5a7a" stroke-width="1"/><path d="M8 0.5V5.5" stroke="#4a5a7a" stroke-width="1.2"/><path d="M13.8 6.5C15.5 8.5 15.8 10 14.8 11C13.6 11 13.2 9 13.8 6.5Z" fill="#3c6cd4"/><rect x="0.5" y="12.5" width="15" height="3" fill="#f4f6fa" stroke="#9aa4b8" stroke-width=".8"/></svg>
<svg style="left:963.1px;top:101.5px;" width="6" height="4" viewBox="0 0 6 4"><path d="M0.5 0.3H5.5L3 3.3Z" fill="#4a6aa8"/></svg>
<svg style="left:977.5px;top:95.5px;" width="15" height="15" viewBox="0 0 15 15"><path d="M1 1H14M1 7H14M1 1V13M7.5 1V13M14 1V13" stroke="#5a6a8a" stroke-width="1" stroke-dasharray="1 1"/><path d="M0.5 13.6H14.5" stroke="#111" stroke-width="1.6"/></svg>
<svg style="left:996.4px;top:101.5px;" width="6" height="4" viewBox="0 0 6 4"><path d="M0.5 0.3H5.5L3 3.3Z" fill="#4a6aa8"/></svg>
<div style="left:1022.4px;top:60.4px;width:71.4px;height:55.6px;background:#f9f9f9;border:2px solid #f0b850;border-radius:2px;box-shadow:inset 0 0 2px 1px #fbe3a8, 0 0 1px #d89c30"></div>
<div style="left:1098px;top:64px;width:64px;height:48px;background:#f6f6f6"></div>
<div style="left:1170px;top:64px;width:64px;height:48px;background:#f6f6f6"></div>
<div style="left:1242px;top:64px;width:64px;height:48px;background:#f6f6f6"></div>
<div style="left:1314px;top:64px;width:64px;height:48px;background:#f6f6f6"></div>
<div style="left:1386px;top:64px;width:64px;height:48px;background:#f6f6f6"></div>
<div style="left:1458px;top:64px;width:64px;height:48px;background:#f6f6f6"></div>
<div style="left:1026px;top:64px;width:64px;height:48px;overflow:hidden"><span style="left:3.00px;top:11.00px;font-size:12px;letter-spacing:-0.027px;color:#222;font-family:'Liberation Sans';font-weight:normal;font-style:normal;">AaBbCcDc</span></div>
<div style="left:1098px;top:64px;width:64px;height:48px;overflow:hidden"><span style="left:3.00px;top:11.00px;font-size:12px;letter-spacing:-0.027px;color:#222;font-family:'Liberation Sans';font-weight:normal;font-style:normal;">AaBbCcDc</span></div>
<div style="left:1170px;top:64px;width:64px;height:48px;overflow:hidden"><span style="left:3.00px;top:5.00px;font-size:20.5px;letter-spacing:0.000px;color:#111;font-family:'Liberation Serif';font-weight:bold;font-style:normal;">AaBbCc</span></div>
<div style="left:1242px;top:64px;width:64px;height:48px;overflow:hidden"><span style="left:3.00px;top:8.00px;font-size:17.5px;letter-spacing:0.000px;color:#111;font-family:'Liberation Serif';font-weight:bold;font-style:italic;">AaBbCcD</span></div>
<div style="left:1314px;top:64px;width:64px;height:48px;overflow:hidden"><span style="left:3.00px;top:5.00px;font-size:20.5px;letter-spacing:0.000px;color:#111;font-family:'Liberation Serif';font-weight:bold;font-style:normal;">AaBbCc</span></div>
<div style="left:1386px;top:64px;width:64px;height:48px;overflow:hidden"><span style="left:3.00px;top:10.00px;font-size:13.6px;letter-spacing:0.000px;color:#111;font-family:'Liberation Serif';font-weight:normal;font-style:normal;letter-spacing:1px;">AaBbCcDd</span></div>
<div style="left:1458px;top:64px;width:64px;height:48px;overflow:hidden"><span style="left:3.00px;top:11.00px;font-size:12px;letter-spacing:0.045px;color:#9a9a9a;font-family:'Liberation Sans';font-weight:normal;font-style:italic;">AaBbCcDc</span></div>
<span style="left:1029.80px;top:98.00px;font-size:11.3px;letter-spacing:-0.018px;color:#1a1a5c;font-family:'Liberation Sans';font-weight:normal;font-style:normal;">¶ Standard</span>
<span style="left:1100.00px;top:98.00px;font-size:11.3px;letter-spacing:-0.370px;color:#1a1a5c;font-family:'Liberation Sans';font-weight:normal;font-style:normal;">¶ Kein Lee...</span>
<span style="left:1171.40px;top:98.00px;font-size:11.3px;letter-spacing:0.033px;color:#1a1a5c;font-family:'Liberation Sans';font-weight:normal;font-style:normal;">Überschrif...</span>
<span style="left:1243.60px;top:98.00px;font-size:11.3px;letter-spacing:0.024px;color:#1a1a5c;font-family:'Liberation Sans';font-weight:normal;font-style:normal;">Überschrif...</span>
<span style="left:1334.50px;top:98.00px;font-size:11.3px;letter-spacing:0.016px;color:#1a1a5c;font-family:'Liberation Sans';font-weight:normal;font-style:normal;">Titel</span>
<span style="left:1393.00px;top:98.00px;font-size:11.3px;letter-spacing:0.387px;color:#1a1a5c;font-family:'Liberation Sans';font-weight:normal;font-style:normal;">Untertitel</span>
<span style="left:1460.00px;top:98.00px;font-size:11.3px;letter-spacing:-0.125px;color:#1a1a5c;font-family:'Liberation Sans';font-weight:normal;font-style:normal;">Schwache...</span>
<div style="left:1528px;top:60px;width:13px;height:19px;background:#d9e5f4;border:1px solid #c2d4ea;border-radius:2px 2px 0 0"></div>
<div style="left:1528px;top:79px;width:13px;height:19px;background:linear-gradient(#dbe7f5,#c9daee);border:1px solid #a9bfdd"></div>
<div style="left:1528px;top:98px;width:13px;height:19px;background:linear-gradient(#dbe7f5,#c9daee);border:1px solid #a9bfdd;border-radius:0 0 2px 2px"></div>
<svg style="left:1531.5px;top:67px;" width="6" height="4" viewBox="0 0 6 4"><path d="M0.3 3.5L3 0.5L5.7 3.5Z" fill="#b8c6dc"/></svg>
<svg style="left:1531.5px;top:87px;" width="6" height="4" viewBox="0 0 6 4"><path d="M0.5 0.3H5.5L3 3.3Z" fill="#5878b0"/></svg>
<div style="left:1531.5px;top:103.5px;width:6px;height:1.2px;background:#5878b0"></div>
<svg style="left:1531.5px;top:106.5px;" width="6" height="4" viewBox="0 0 6 4"><path d="M0.5 0.3H5.5L3 3.3Z" fill="#5878b0"/></svg>
<span style="left:1572.50px;top:57.00px;font-size:26px;letter-spacing:0.000px;color:#e08aa0;font-family:'Liberation Serif';font-weight:bold;font-style:normal;">A</span>
<span style="left:1581.00px;top:60.00px;font-size:32px;letter-spacing:0.000px;color:#5a84d0;font-family:'Liberation Serif';font-weight:bold;font-style:normal;">A</span>
<span style="left:1547.00px;top:95.00px;font-size:11.5px;letter-spacing:0.004px;color:#15428b;font-family:'Liberation Sans';font-weight:normal;font-style:normal;-webkit-text-stroke:0.08px #15428b;">Formatvorlagen</span>
<span style="left:1565.00px;top:108.00px;font-size:11.5px;letter-spacing:0.178px;color:#15428b;font-family:'Liberation Sans';font-weight:normal;font-style:normal;-webkit-text-stroke:0.08px #15428b;">ändern</span>
<svg style="left:1604.5px;top:111.3px;" width="6" height="4" viewBox="0 0 6 4"><path d="M0.5 0.3H5.5L3 3.3Z" fill="#3a5a9a"/></svg>
<svg style="left:1645px;top:59px;" width="16" height="14" viewBox="0 0 16 14"><rect x="1" y="4" width="5.5" height="9" rx="1.5" fill="#7a88a4" stroke="#4a5878" stroke-width=".8"/><rect x="9.5" y="4" width="5.5" height="9" rx="1.5" fill="#7a88a4" stroke="#4a5878" stroke-width=".8"/><rect x="2" y="0.8" width="3.5" height="4" fill="#8a98b4"/><rect x="10.5" y="0.8" width="3.5" height="4" fill="#8a98b4"/><rect x="6.5" y="5" width="3" height="3" fill="#5a6884"/></svg>
<span style="left:1664.40px;top:61.00px;font-size:11.5px;letter-spacing:-0.343px;color:#15428b;font-family:'Liberation Sans';font-weight:normal;font-style:normal;-webkit-text-stroke:0.08px #15428b;">Suchen</span>
<svg style="left:1706.9px;top:64.5px;" width="5" height="4" viewBox="0 0 5 4"><path d="M0.5 0.3H4.5L2.5 3.3Z" fill="#3a5a9a"/></svg>
<span style="left:1644.50px;top:79.00px;font-size:9px;letter-spacing:0.000px;color:#555;font-family:'Liberation Sans';font-weight:normal;font-style:normal;">ab</span>
<span style="left:1652.00px;top:86.00px;font-size:9.5px;letter-spacing:0.000px;color:#3a9a3a;font-family:'Liberation Sans';font-weight:bold;font-style:normal;">ac</span>
<svg style="left:1644.5px;top:87.5px;" width="8" height="6" viewBox="0 0 8 6"><path d="M0.8 0V3.5H6M4 1.5L6.3 3.5L4 5.5" fill="none" stroke="#3c62c4" stroke-width="1"/></svg>
<span style="left:1664.40px;top:83.00px;font-size:11.5px;letter-spacing:-0.470px;color:#15428b;font-family:'Liberation Sans';font-weight:normal;font-style:normal;-webkit-text-stroke:0.08px #15428b;">Ersetzen</span>
<svg style="left:1647px;top:101px;" width="10" height="16" viewBox="0 0 10 16"><path d="M1 0.8V12L3.8 9.5L5.8 14.6L7.6 13.8L5.6 8.8H9Z" fill="#fff" stroke="#222" stroke-width=".9"/></svg>
<span style="left:1664.40px;top:105.00px;font-size:11.5px;letter-spacing:-0.018px;color:#15428b;font-family:'Liberation Sans';font-weight:normal;font-style:normal;-webkit-text-stroke:0.08px #15428b;">Markieren</span>
<svg style="left:1719.5px;top:108.5px;" width="6" height="4" viewBox="0 0 6 4"><path d="M0.5 0.3H5.5L3 3.3Z" fill="#3a5a9a"/></svg>
<svg style="left:351px;top:2px;" width="42" height="42" viewBox="0 0 42 42"><defs><radialGradient id="ob" cx=".5" cy=".35" r=".7"><stop offset="0" stop-color="#ffffff"/><stop offset=".55" stop-color="#eef1f6"/><stop offset="1" stop-color="#bcc8da"/></radialGradient></defs><circle cx="20.4" cy="21" r="18.3" fill="url(#ob)" stroke="#9aa4b4" stroke-width="1.2"/><circle cx="20.4" cy="21" r="16.6" fill="none" stroke="#fff" stroke-width="1" opacity=".8"/><defs><linearGradient id="lg1" x1="0" y1="0" x2="1" y2="1"><stop offset="0" stop-color="#c43a1a"/><stop offset="1" stop-color="#eda034"/></linearGradient></defs><g fill="none"><path d="M19.6 12H12.4Q10.6 12 10.6 13.8V18.8Q10.6 20.6 12.4 20.6H19.6" stroke="url(#lg1)" stroke-width="2.8"/><path d="M19.8 12.2V15.4" stroke="#d8641e" stroke-width="2.4"/><rect x="23.6" y="15.6" width="6.6" height="5.4" rx="1.2" stroke="#3f80cc" stroke-width="1.9"/><circle cx="22" cy="21.6" r="1.1" fill="#2c62a8"/><circle cx="18.6" cy="21.4" r="1.1" fill="#c8622a"/><rect x="12.2" y="25" width="8" height="7.4" rx="1.4" stroke="#f0bc2c" stroke-width="2.6" fill="#fdf3c4"/><rect x="24" y="24.8" width="6.8" height="6.6" rx="1.3" stroke="#54a434" stroke-width="2.5" fill="#d4ecbc"/><circle cx="21.8" cy="23.6" r="1" fill="#7ab84a"/></g></svg>
<div style="left:1444.6px;top:26.4px;width:344px;height:96px;background:linear-gradient(rgba(249,249,249,0.25) 0,rgba(249,249,249,0.25) 36.6px,rgba(249,249,249,0.2) 36.6px,rgba(249,249,249,0.2) 53.6px,rgba(249,249,249,0.15) 53.6px,rgba(249,249,249,0.15) 78.6px,rgba(249,249,249,0.08) 78.6px,rgba(249,249,249,0.08) 96px)"></div>
<div style="left:1470px;top:26.4px;width:318px;height:53.6px;background:rgba(249,249,249,0.35)"></div>
<div style="left:1490.7px;top:0px;width:298px;height:141px;background:linear-gradient(rgba(249,249,249,0.93) 0,rgba(249,249,249,0.93) 26px,rgba(249,249,249,0.86) 26px,rgba(249,249,249,0.86) 56px,rgba(249,249,249,0.6) 56px,rgba(249,249,249,0.6) 63px,rgba(249,249,249,0.62) 63px,rgba(249,249,249,0.58) 80px,rgba(249,249,249,0.42) 80px,rgba(249,249,249,0.36) 105px,rgba(249,249,249,0.16) 105px,rgba(249,249,249,0.13) 122px,rgba(249,249,249,0.05) 122px,rgba(249,249,249,0) 139px)"></div>
<div style="left:1733px;top:53px;width:55px;height:86px;background:linear-gradient(rgba(255,255,255,.5),rgba(240,250,252,.55))"></div>
<svg style="left:100px;top:120px" width="150" height="136" viewBox="0 0 971 880"><defs>
<linearGradient id="wbg" x1="0" y1="0" x2="1" y2="1"><stop offset="0" stop-color="#dfe9f7"/><stop offset=".45" stop-color="#b9ceed"/><stop offset="1" stop-color="#789dd8"/></linearGradient>
<linearGradient id="wW" x1="0" y1="0" x2=".6" y2="1"><stop offset="0" stop-color="#1f97e4"/><stop offset=".5" stop-color="#1b62c4"/><stop offset="1" stop-color="#1a4db0"/></linearGradient>
<linearGradient id="wl" x1="0" y1="0" x2="1" y2="0"><stop offset="0" stop-color="#c9d6ec"/><stop offset="1" stop-color="#5a7cc0"/></linearGradient>
<clipPath id="wc"><path d="M118 800V240C118 150 190 84 270 84H818V800Z"/></clipPath></defs>
<path d="M110 806V240C110 140 185 76 270 76H824V806Z" fill="url(#wbg)" stroke="#1c4fa3" stroke-width="13"/>
<g clip-path="url(#wc)">
<path d="M118 560C300 300 560 220 818 260V84H118Z" fill="#dbe6f5" opacity=".7"/>
<path d="M560 250C680 280 760 300 818 300V480C760 450 680 420 600 400Z" fill="#6d95d4" opacity=".75"/>
<path d="M640 240C720 225 780 230 818 240V300C760 290 700 270 640 240Z" fill="#a9c2e6" opacity=".8"/>
<path d="M130 800L252 470L640 408L842 497L748 800Z" fill="#f8f8f9"/>
<path d="M842 497L748 800H830V520Z" fill="#1c4fa3"/>
<path d="M610 632L716 672" stroke="url(#wl)" stroke-width="20"/><path d="M476 682L690 756" stroke="url(#wl)" stroke-width="20"/><path d="M262 708L470 772" stroke="url(#wl)" stroke-width="18"/>
</g>
<path d="M124 794V240C124 158 192 90 270 90H810" fill="none" stroke="#fff" stroke-width="6" opacity=".9"/>
<path d="M200 200H298L385 612H290Z M470 200H545L385 612H290Z M400 200H470L580 612H490Z M560 200H668L580 612H490Z" fill="url(#wW)"/></svg>
<svg style="left:85px;top:375px" width="190" height="130" viewBox="0 0 1286 880"><circle cx="598.5" cy="287.5" r="213" fill="#1b87d1"/>
<path d="M520 196C570 178 620 190 648 215C690 182 740 182 772 196C720 200 680 215 650 243C620 213 575 198 520 196Z" fill="#fff"/>
<path d="M390 335C450 318 510 322 548 348C600 305 700 300 768 326C690 326 610 350 552 414C520 372 460 350 396 362Z" fill="#fff"/></svg>
<span style="left:122.00px;top:453.00px;font-size:14.8px;letter-spacing:0.000px;color:#8a8a8a;font-family:'Liberation Sans';font-weight:normal;font-style:normal;-webkit-text-stroke:0.25px #f4f4f4;transform:scaleX(0.9763);transform-origin:0 0;">Apache</span>
<span style="left:97.30px;top:462.00px;font-size:33.5px;letter-spacing:0.000px;color:#1b87d1;font-family:'Liberation Sans';font-weight:normal;font-style:normal;-webkit-text-stroke:0.35px #f4f4f4;transform:scaleX(0.9152);transform-origin:0 0;">Open</span>
<span style="left:173.70px;top:462.00px;font-size:33.5px;letter-spacing:0.000px;color:#555;font-family:'Liberation Sans';font-weight:normal;font-style:normal;-webkit-text-stroke:0.35px #f4f4f4;transform:scaleX(0.9092);transform-origin:0 0;">Office</span>
<span style="left:252.30px;top:468.00px;font-size:9.5px;letter-spacing:0.000px;color:#555;font-family:'Liberation Sans';font-weight:normal;font-style:normal;transform:scaleX(0.8383);transform-origin:0 0;">TM</span>
<svg style="left:100px;top:620px" width="140" height="136" viewBox="0 0 906 880"><defs>
<linearGradient id="po" x1="0" y1="0" x2="1" y2="1"><stop offset="0" stop-color="#f8d070"/><stop offset=".5" stop-color="#efb252"/><stop offset="1" stop-color="#ecaa4a"/></linearGradient>
<linearGradient id="pb" x1="0" y1="0" x2="1" y2="1"><stop offset="0" stop-color="#86acf4"/><stop offset=".5" stop-color="#5f8ae6"/><stop offset="1" stop-color="#4a72dc"/></linearGradient>
<linearGradient id="pg" x1="0" y1="0" x2="1" y2="1"><stop offset="0" stop-color="#98dc68"/><stop offset=".5" stop-color="#6cbc44"/><stop offset="1" stop-color="#58aa36"/></linearGradient>
<clipPath id="ct"><rect x="0" y="0" width="906" height="432"/></clipPath><clipPath id="cbl"><rect x="0" y="432" width="455" height="448"/></clipPath><clipPath id="cbr"><rect x="455" y="432" width="451" height="448"/></clipPath></defs>
<rect x="106" y="96" width="696" height="696" rx="34" fill="#f6f6f6" stroke="#e89c3c" stroke-width="15" clip-path="url(#ct)"/>
<rect x="106" y="96" width="696" height="696" rx="34" fill="#f6f6f6" stroke="#4a6cd4" stroke-width="15" clip-path="url(#cbl)"/>
<rect x="106" y="96" width="696" height="696" rx="34" fill="#f6f6f6" stroke="#4e9e30" stroke-width="15" clip-path="url(#cbr)"/>
<path d="M140 796H455" stroke="#4a6cd4" stroke-width="10"/><path d="M455 796H770" stroke="#4e9e30" stroke-width="10"/>
<rect x="298" y="135" width="314" height="316" rx="12" fill="url(#po)"/>
<rect x="140" y="432" width="316" height="320" rx="12" fill="url(#pb)"/>
<rect x="455" y="432" width="317" height="320" rx="12" fill="url(#pg)"/>
<g fill="none" stroke="#fdfdfd" stroke-width="36" stroke-linecap="round" stroke-linejoin="round">
<path d="M412 238L468 378M412 238C440 222 500 212 520 250C534 292 490 310 446 322"/>
<path d="M190 548L282 676L318 552L378 642L372 520"/>
<path d="M672 548C640 510 560 520 556 566C556 612 680 590 680 646C676 694 590 694 566 650"/>
</g></svg>
<span style="left:39.50px;top:829.00px;font-size:10px;letter-spacing:-0.536px;color:#d0d0d0;font-family:'Liberation Sans';font-weight:bold;font-style:normal;">blog</span>
</body></html>
